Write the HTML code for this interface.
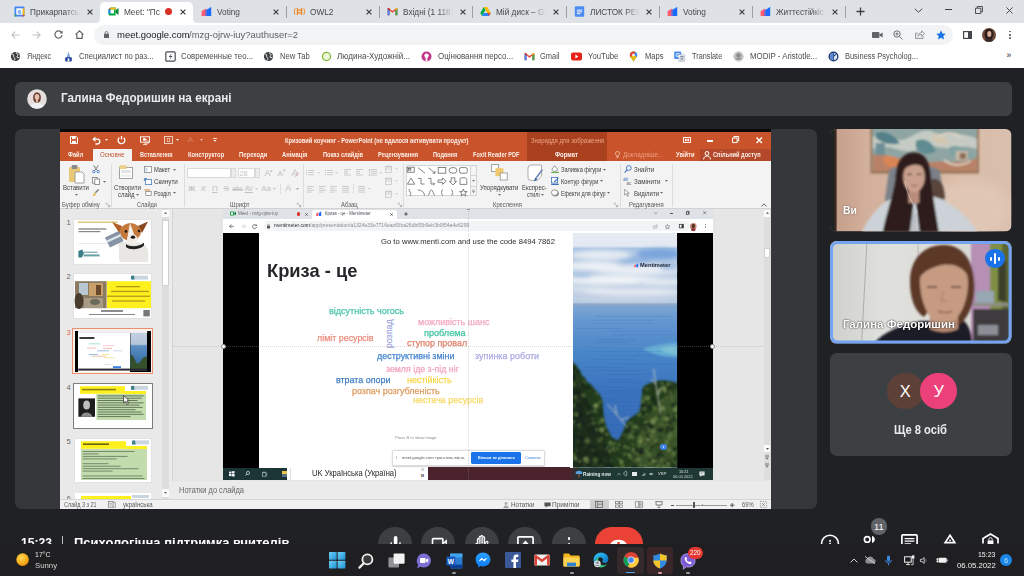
<!DOCTYPE html>
<html lang="uk"><head><meta charset="utf-8"><meta name="viewport" content="width=1024,height=576"><title>Meet: Психологічна підтримка вчителів</title><style>
html,body{margin:0;padding:0;background:#202124;}
body{width:1024px;height:576px;overflow:hidden;position:relative;font-family:"Liberation Sans",sans-serif;}
#root{position:absolute;left:-12px;top:-12px;width:1048px;height:600px;overflow:hidden;background:#202124;}
#pg{position:absolute;left:12px;top:12px;width:1024px;height:576px;}
.b{position:absolute;box-sizing:border-box;}
.t{position:absolute;white-space:nowrap;line-height:1;transform-origin:0 50%;display:block;}
svg{position:absolute;overflow:visible;}
.clip{position:absolute;overflow:hidden;}
</style></head><body><div id="root"><div id="pg">
<!-- chrome_top -->
<div class="b" style="left:-12px;top:-12px;width:1048px;height:35px;background:#dee1e6;"></div>
<div class="b" style="left:-12px;top:22.6px;width:1048px;height:46px;background:#ffffff;"></div>
<div class="b" style="left:100px;top:2px;width:93.2px;height:21px;background:#ffffff;border-radius:5px 5px 0 0;"></div>
<svg style="left:96px;top:18.6px;" width="4" height="4" viewBox="0 0 4 4"><path d="M4 0V4H0A4 4 0 0 0 4 0z" fill="#fff"/></svg>
<svg style="left:193.2px;top:18.6px;" width="4" height="4" viewBox="0 0 4 4"><path d="M0 0V4H4A4 4 0 0 1 0 0z" fill="#fff"/></svg>
<div class="clip" style="left:30.3px;top:4px;width:50px;height:16px;-webkit-mask-image:linear-gradient(90deg,#000 70%,transparent 100%);mask-image:linear-gradient(90deg,#000 70%,transparent 100%);"><span class="t" style="left:0.00px;top:3.52px;font-size:8.6px;color:#45484d;transform:scaleX(0.9600);">Прикарпатськ</span></div>
<svg style="left:86.8px;top:8.5px;" width="6" height="6" viewBox="0 0 6 6"><path d="M0.6 0.6L5.4 5.4M5.4 0.6L0.6 5.4" stroke="#3c4043" stroke-width="1.2" fill="none"/></svg>
<svg style="left:14.3px;top:6.0px;" width="11" height="11" viewBox="0 0 11 11"><rect x="0.5" y="0.5" width="10" height="10" rx="1.2" fill="#4285f4"/><rect x="2.3" y="2.3" width="6.4" height="6.4" fill="#fff"/><path d="M8.7 8.7h1.8v0.6a1.2 1.2 0 0 1-1.2 1.2h-0.6z" fill="#ea4335"/><rect x="0.5" y="8.7" width="1.8" height="1.8" fill="#34a853"/><rect x="8.7" y="2.3" width="1.8" height="6.4" fill="#fbbc04"/><text x="5.5" y="7.9" font-size="6" font-weight="700" text-anchor="middle" fill="#4285f4" font-family="Liberation Sans, sans-serif">6</text></svg>
<div class="clip" style="left:123.5px;top:4px;width:40px;height:16px;"><span class="t" style="left:0.00px;top:3.52px;font-size:8.6px;color:#45484d;transform:scaleX(0.9600);">Meet: &quot;Пс</span></div>
<svg style="left:180px;top:8.5px;" width="6" height="6" viewBox="0 0 6 6"><path d="M0.6 0.6L5.4 5.4M5.4 0.6L0.6 5.4" stroke="#3c4043" stroke-width="1.2" fill="none"/></svg>
<svg style="left:107.5px;top:6.0px;" width="11" height="11" viewBox="0 0 11 11"><path d="M0.5 3.6L2.6 1.6H7.6V9.4H1.5a1 1 0 0 1-1-1z" fill="#00ac47"/><path d="M0.5 3.6L2.6 1.6V3.6z" fill="#ea4335"/><rect x="0.5" y="3.6" width="2.1" height="3.8" fill="#2684fc"/><path d="M2.6 1.6H7.6V3.6H2.6z" fill="#ffba00"/><rect x="2.6" y="3.6" width="3.4" height="3.8" fill="#fff"/><path d="M7.6 4.2L10.5 2V9L7.6 6.8z" fill="#00832d"/></svg>
<div class="clip" style="left:216.7px;top:4px;width:50px;height:16px;"><span class="t" style="left:0.00px;top:3.52px;font-size:8.6px;color:#45484d;transform:scaleX(0.9600);">Voting</span></div>
<svg style="left:273.2px;top:8.5px;" width="6" height="6" viewBox="0 0 6 6"><path d="M0.6 0.6L5.4 5.4M5.4 0.6L0.6 5.4" stroke="#3c4043" stroke-width="1.2" fill="none"/></svg>
<svg style="left:200.7px;top:6.0px;" width="11" height="11" viewBox="0 0 11 11"><path d="M0.6 10V5.2L4.8 2.6V10z" fill="#ff5a6e"/><path d="M4.2 10V4.4L6.4 2.6V10z" fill="#6b6bd6"/><path d="M6 10V3.8L10.2 0.8V10z" fill="#196cff"/></svg>
<div class="clip" style="left:309.9px;top:4px;width:50px;height:16px;"><span class="t" style="left:0.00px;top:3.52px;font-size:8.6px;color:#45484d;transform:scaleX(0.9600);">OWL2</span></div>
<svg style="left:366.4px;top:8.5px;" width="6" height="6" viewBox="0 0 6 6"><path d="M0.6 0.6L5.4 5.4M5.4 0.6L0.6 5.4" stroke="#3c4043" stroke-width="1.2" fill="none"/></svg>
<svg style="left:293.9px;top:6.0px;" width="11" height="11" viewBox="0 0 11 11"><path d="M1.2 2.4C0.2 4 0.2 7 1.2 8.6M9.8 2.4C10.8 4 10.8 7 9.8 8.6" stroke="#f08a24" stroke-width="1" fill="none"/><path d="M3.4 2V9M7.6 2V9M3.4 4.2H7.6M3.4 6.8H7.6" stroke="#f08a24" stroke-width="1.3" fill="none"/></svg>
<div class="clip" style="left:403.1px;top:4px;width:50px;height:16px;-webkit-mask-image:linear-gradient(90deg,#000 70%,transparent 100%);mask-image:linear-gradient(90deg,#000 70%,transparent 100%);"><span class="t" style="left:0.00px;top:3.52px;font-size:8.6px;color:#45484d;transform:scaleX(0.9600);">Вхідні (1 118)</span></div>
<svg style="left:459.6px;top:8.5px;" width="6" height="6" viewBox="0 0 6 6"><path d="M0.6 0.6L5.4 5.4M5.4 0.6L0.6 5.4" stroke="#3c4043" stroke-width="1.2" fill="none"/></svg>
<svg style="left:387.1px;top:6.0px;" width="11" height="11" viewBox="0 0 11 11"><path d="M0.6 2.6V9.2H2.6V4.6L5.5 6.8L8.4 4.6V9.2H10.4V2.6L9.4 2L5.5 4.9L1.6 2z" fill="#ea4335"/><path d="M0.6 2.6V9.2H2.6V4.3z" fill="#4285f4"/><path d="M10.4 2.6V9.2H8.4V4.3z" fill="#34a853"/><path d="M8.4 4.6L10.4 3V2.6L9.4 2L8.4 2.8z" fill="#fbbc04"/><path d="M2.6 4.6L0.6 3V2.6L1.6 2L2.6 2.8z" fill="#c5221f"/></svg>
<div class="clip" style="left:496.3px;top:4px;width:50px;height:16px;-webkit-mask-image:linear-gradient(90deg,#000 70%,transparent 100%);mask-image:linear-gradient(90deg,#000 70%,transparent 100%);"><span class="t" style="left:0.00px;top:3.52px;font-size:8.6px;color:#45484d;transform:scaleX(0.9600);">Мій диск – Go</span></div>
<svg style="left:552.8px;top:8.5px;" width="6" height="6" viewBox="0 0 6 6"><path d="M0.6 0.6L5.4 5.4M5.4 0.6L0.6 5.4" stroke="#3c4043" stroke-width="1.2" fill="none"/></svg>
<svg style="left:480.3px;top:6.0px;" width="11" height="11" viewBox="0 0 11 11"><path d="M3.8 1H7.2L10.7 7H7.3z" fill="#ffba00"/><path d="M3.8 1L0.3 7L2 10L5.5 4z" fill="#00ac47"/><path d="M2 10H9L10.7 7H3.7z" fill="#2684fc"/><path d="M7.3 7H10.7L9 10z" fill="#ea4335"/></svg>
<div class="clip" style="left:589.5px;top:4px;width:50px;height:16px;-webkit-mask-image:linear-gradient(90deg,#000 70%,transparent 100%);mask-image:linear-gradient(90deg,#000 70%,transparent 100%);"><span class="t" style="left:0.00px;top:3.52px;font-size:8.6px;color:#45484d;transform:scaleX(0.9600);">ЛИСТОК РЕЄС</span></div>
<svg style="left:646.0px;top:8.5px;" width="6" height="6" viewBox="0 0 6 6"><path d="M0.6 0.6L5.4 5.4M5.4 0.6L0.6 5.4" stroke="#3c4043" stroke-width="1.2" fill="none"/></svg>
<svg style="left:573.5px;top:6.0px;" width="11" height="11" viewBox="0 0 11 11"><rect x="0.8" y="0.3" width="9.4" height="10.4" rx="1.2" fill="#4a8af4"/><path d="M2.8 4.1H8.2M2.8 5.9H8.2M2.8 7.7H6.4" stroke="#fff" stroke-width="0.95"/></svg>
<div class="clip" style="left:682.7px;top:4px;width:50px;height:16px;"><span class="t" style="left:0.00px;top:3.52px;font-size:8.6px;color:#45484d;transform:scaleX(0.9600);">Voting</span></div>
<svg style="left:739.2px;top:8.5px;" width="6" height="6" viewBox="0 0 6 6"><path d="M0.6 0.6L5.4 5.4M5.4 0.6L0.6 5.4" stroke="#3c4043" stroke-width="1.2" fill="none"/></svg>
<svg style="left:666.7px;top:6.0px;" width="11" height="11" viewBox="0 0 11 11"><path d="M0.6 10V5.2L4.8 2.6V10z" fill="#ff5a6e"/><path d="M4.2 10V4.4L6.4 2.6V10z" fill="#6b6bd6"/><path d="M6 10V3.8L10.2 0.8V10z" fill="#196cff"/></svg>
<div class="clip" style="left:775.9px;top:4px;width:50px;height:16px;-webkit-mask-image:linear-gradient(90deg,#000 70%,transparent 100%);mask-image:linear-gradient(90deg,#000 70%,transparent 100%);"><span class="t" style="left:0.00px;top:3.52px;font-size:8.6px;color:#45484d;transform:scaleX(0.9600);">Життєстійкіст</span></div>
<svg style="left:832.4px;top:8.5px;" width="6" height="6" viewBox="0 0 6 6"><path d="M0.6 0.6L5.4 5.4M5.4 0.6L0.6 5.4" stroke="#3c4043" stroke-width="1.2" fill="none"/></svg>
<svg style="left:759.9px;top:6.0px;" width="11" height="11" viewBox="0 0 11 11"><path d="M0.6 10V5.2L4.8 2.6V10z" fill="#ff5a6e"/><path d="M4.2 10V4.4L6.4 2.6V10z" fill="#6b6bd6"/><path d="M6 10V3.8L10.2 0.8V10z" fill="#196cff"/></svg>
<div class="b" style="left:285.9px;top:6px;width:1px;height:12px;background:#9aa0a6;"></div>
<div class="b" style="left:379.1px;top:6px;width:1px;height:12px;background:#9aa0a6;"></div>
<div class="b" style="left:472.3px;top:6px;width:1px;height:12px;background:#9aa0a6;"></div>
<div class="b" style="left:565.5px;top:6px;width:1px;height:12px;background:#9aa0a6;"></div>
<div class="b" style="left:658.7px;top:6px;width:1px;height:12px;background:#9aa0a6;"></div>
<div class="b" style="left:751.9px;top:6px;width:1px;height:12px;background:#9aa0a6;"></div>
<div class="b" style="left:845.1px;top:6px;width:1px;height:12px;background:#9aa0a6;"></div>
<div class="b" style="left:164.5px;top:8px;width:7px;height:7px;background:#d93025;border-radius:50%;"></div>
<svg style="left:855.5px;top:7px;" width="9" height="9" viewBox="0 0 9 9"><path d="M4.5 0.5V8.5M0.5 4.5H8.5" stroke="#3c4043" stroke-width="1.3" fill="none"/></svg>
<svg style="left:913.5px;top:7.5px;" width="9" height="5" viewBox="0 0 9 5"><path d="M0.8 0.8L4.5 4.2L8.2 0.8" stroke="#45484d" stroke-width="1" fill="none"/></svg>
<div class="b" style="left:944.5px;top:9.3px;width:7px;height:1px;background:#3c4043;"></div>
<svg style="left:974.5px;top:6px;" width="8" height="8" viewBox="0 0 8 8"><path d="M0.5 2.2h5.3v5.3h-5.3zM2.2 2.2V0.5h5.3v5.3H5.8" stroke="#3c4043" stroke-width="0.9" fill="none"/></svg>
<svg style="left:1006px;top:6.5px;" width="7" height="7" viewBox="0 0 7 7"><path d="M0.4 0.4L6.6 6.6M6.6 0.4L0.4 6.6" stroke="#3c4043" stroke-width="0.9" fill="none"/></svg>
<svg style="left:11px;top:30.700000000000003px;" width="9" height="8" viewBox="0 0 9 8"><path d="M8.5 4H1M4.2 0.6L0.9 4L4.2 7.4" stroke="#bdc1c6" stroke-width="1.1" fill="none"/></svg>
<svg style="left:32px;top:30.700000000000003px;" width="9" height="8" viewBox="0 0 9 8"><path d="M0.5 4H8M4.8 0.6L8.1 4L4.8 7.4" stroke="#bdc1c6" stroke-width="1.1" fill="none"/></svg>
<svg style="left:53.5px;top:30.200000000000003px;" width="9" height="9" viewBox="0 0 9 9"><path d="M7.6 2.6A3.6 3.6 0 1 0 8.1 5.2" stroke="#5f6368" stroke-width="1.2" fill="none"/><path d="M8.6 0.4V3.4H5.6z" fill="#5f6368"/></svg>
<svg style="left:75px;top:30.200000000000003px;" width="9" height="9" viewBox="0 0 9 9"><path d="M0.6 4.6L4.5 0.9L8.4 4.6M1.8 4V8.3H7.2V4" stroke="#5f6368" stroke-width="1.15" fill="none"/></svg>
<div class="b" style="left:93.5px;top:25px;width:859px;height:19.5px;background:#f1f3f4;border-radius:10px;"></div>
<svg style="left:103.5px;top:30.700000000000003px;" width="5" height="7" viewBox="0 0 5 7"><rect x="0" y="2.8" width="5" height="4.2" rx="0.6" fill="#5f6368"/><path d="M1.1 3V1.9a1.4 1.4 0 0 1 2.8 0V3" stroke="#5f6368" stroke-width="0.8" fill="none"/></svg>
<span class="t" style="left:116.60px;top:30.07px;font-size:9.6px;color:#202124;transform:scaleX(0.9861);">meet.google.com</span>
<span class="t" style="left:189.11px;top:30.07px;font-size:9.6px;color:#5f6368;transform:scaleX(0.9861);">/mzg-ojrw-iuy?authuser=2</span>
<svg style="left:871.5px;top:31.700000000000003px;" width="11" height="6" viewBox="0 0 11 6"><rect x="0" y="0" width="7.4" height="6" rx="0.8" fill="#5f6368"/><path d="M7.4 2.6L10.6 0.6V5.4L7.4 3.4z" fill="#5f6368"/></svg>
<svg style="left:893px;top:30.200000000000003px;" width="10" height="10" viewBox="0 0 10 10"><circle cx="4" cy="4" r="3.2" stroke="#5f6368" stroke-width="0.9" fill="none"/><path d="M6.4 6.4L9.4 9.4M2.4 4H5.6M4 2.4V5.6" stroke="#5f6368" stroke-width="0.9" fill="none"/></svg>
<svg style="left:914.5px;top:30.200000000000003px;" width="10" height="9" viewBox="0 0 10 9"><path d="M2.6 3.2H0.6V8.4H8V6.4" stroke="#80868b" stroke-width="0.9" fill="none"/><path d="M2.8 6.2C3.2 3.9 4.6 2.8 6.6 2.7V0.8L9.6 3.6L6.6 6.3V4.5C5 4.5 3.8 5 2.8 6.2z" stroke="#80868b" stroke-width="0.8" fill="none"/></svg>
<svg style="left:936px;top:29.700000000000003px;" width="10" height="10" viewBox="0 0 10 10"><path d="M5 0.3L6.45 3.4L9.8 3.8L7.3 6.1L8 9.5L5 7.8L2 9.5L2.7 6.1L0.2 3.8L3.55 3.4z" fill="#1a73e8"/></svg>
<svg style="left:963px;top:30.700000000000003px;" width="9" height="8" viewBox="0 0 9 8"><rect x="0.6" y="0.6" width="7.8" height="6.8" fill="none" stroke="#45484d" stroke-width="1.2"/><rect x="5" y="0.6" width="3.4" height="6.8" fill="#45484d"/></svg>
<svg style="left:981.7px;top:27.700000000000003px;" width="14" height="14" viewBox="0 0 14 14"><defs><clipPath id="cpA"><circle cx="7" cy="7" r="7"/></clipPath></defs><g clip-path="url(#cpA)"><rect width="14" height="14" fill="#6b4a3c"/><ellipse cx="7" cy="6.3" rx="4.4" ry="5.6" fill="#2e1d18"/><ellipse cx="7.3" cy="6" rx="2.1" ry="2.9" fill="#d9b19b"/><ellipse cx="7" cy="14" rx="5" ry="3.6" fill="#3a2a28"/></g></svg>
<div class="b" style="left:1009.1px;top:30.500000000000004px;width:1.7px;height:1.7px;background:#5f6368;border-radius:50%;"></div>
<div class="b" style="left:1009.1px;top:33.900000000000006px;width:1.7px;height:1.7px;background:#5f6368;border-radius:50%;"></div>
<div class="b" style="left:1009.1px;top:37.300000000000004px;width:1.7px;height:1.7px;background:#5f6368;border-radius:50%;"></div>
<svg style="left:9.5px;top:50.7px;" width="11" height="11" viewBox="0 0 11 11"><circle cx="5.5" cy="5.5" r="4.6" fill="#3c4043"/><path d="M2 3.2C3.4 3 4 4 3.6 5C3.2 6 4.6 6.4 4.8 7.6C5 8.8 4.2 9.4 3.8 9.6M6.8 1.2C6 2.2 6.6 3 7.6 3.2C8.6 3.4 8.2 4.6 7.4 5C6.6 5.4 7 6.8 8 6.8C8.8 6.8 9.4 6.2 9.8 5.6" stroke="#fff" stroke-width="0.9" fill="none"/></svg>
<span class="t" style="left:27.00px;top:51.87px;font-size:8.3px;color:#4a4d51;transform:scaleX(0.8605);">Яндекс</span>
<svg style="left:62.5px;top:50.7px;" width="11" height="11" viewBox="0 0 11 11"><path d="M5.5 0.6L7.6 7.4H3.4z" fill="#7aa7d9"/><rect x="2.2" y="6.2" width="6.6" height="4.2" rx="1" fill="#1f3f8f"/><rect x="4.6" y="7.4" width="1.8" height="3" fill="#fff"/></svg>
<span class="t" style="left:79.00px;top:51.87px;font-size:8.3px;color:#4a4d51;transform:scaleX(0.9298);">Специалист по раз...</span>
<svg style="left:164.5px;top:50.7px;" width="11" height="11" viewBox="0 0 11 11"><rect x="0.8" y="0.8" width="9.4" height="9.4" rx="1.2" fill="#fff" stroke="#4a4f57" stroke-width="1.2"/><path d="M6.8 2.4L3.6 6H5.6L4.4 8.8L7.6 5H5.6z" fill="#4a4f57"/></svg>
<span class="t" style="left:181.00px;top:51.87px;font-size:8.3px;color:#4a4d51;transform:scaleX(0.9419);">Современные тео...</span>
<svg style="left:263.2px;top:50.7px;" width="11" height="11" viewBox="0 0 11 11"><circle cx="5.5" cy="5.5" r="4.6" fill="#3c4043"/><path d="M2 3.2C3.4 3 4 4 3.6 5C3.2 6 4.6 6.4 4.8 7.6C5 8.8 4.2 9.4 3.8 9.6M6.8 1.2C6 2.2 6.6 3 7.6 3.2C8.6 3.4 8.2 4.6 7.4 5C6.6 5.4 7 6.8 8 6.8C8.8 6.8 9.4 6.2 9.8 5.6" stroke="#fff" stroke-width="0.9" fill="none"/></svg>
<span class="t" style="left:279.80px;top:51.87px;font-size:8.3px;color:#4a4d51;transform:scaleX(0.9254);">New Tab</span>
<svg style="left:320.5px;top:50.7px;" width="11" height="11" viewBox="0 0 11 11"><circle cx="5.5" cy="5.5" r="4.1" fill="#eef6dc" stroke="#86b93a" stroke-width="1.3"/></svg>
<span class="t" style="left:336.90px;top:51.87px;font-size:8.3px;color:#4a4d51;transform:scaleX(0.9743);">Людина-Художній...</span>
<svg style="left:421.4px;top:50.7px;" width="11" height="11" viewBox="0 0 11 11"><circle cx="5.5" cy="5.5" r="5" fill="#c2358a"/><circle cx="5.5" cy="4.6" r="2.2" fill="#fff"/><rect x="4.6" y="6" width="1.8" height="4.4" fill="#fff"/></svg>
<span class="t" style="left:437.60px;top:51.87px;font-size:8.3px;color:#4a4d51;transform:scaleX(0.9610);">Оцінювання персо...</span>
<svg style="left:523.9px;top:50.7px;" width="11" height="11" viewBox="0 0 11 11"><path d="M0.6 2.6V9.2H2.6V4.6L5.5 6.8L8.4 4.6V9.2H10.4V2.6L9.4 2L5.5 4.9L1.6 2z" fill="#ea4335"/><path d="M0.6 2.6V9.2H2.6V4.3z" fill="#4285f4"/><path d="M10.4 2.6V9.2H8.4V4.3z" fill="#34a853"/><path d="M8.4 4.6L10.4 3V2.6L9.4 2L8.4 2.8z" fill="#fbbc04"/><path d="M2.6 4.6L0.6 3V2.6L1.6 2L2.6 2.8z" fill="#c5221f"/></svg>
<span class="t" style="left:540.20px;top:51.87px;font-size:8.3px;color:#4a4d51;transform:scaleX(0.9004);">Gmail</span>
<svg style="left:571.1px;top:50.7px;" width="11" height="11" viewBox="0 0 11 11"><rect x="0" y="1.6" width="11" height="7.8" rx="2" fill="#e62117"/><path d="M4.4 3.6L7.4 5.5L4.4 7.4z" fill="#fff"/></svg>
<span class="t" style="left:587.70px;top:51.87px;font-size:8.3px;color:#4a4d51;transform:scaleX(0.9305);">YouTube</span>
<svg style="left:628.3px;top:50.7px;" width="11" height="11" viewBox="0 0 11 11"><path d="M5.5 0.4C3.3 0.4 1.8 2 1.8 4C1.8 6.4 4.6 8 5.5 10.8C6.4 8 9.2 6.4 9.2 4C9.2 2 7.7 0.4 5.5 0.4z" fill="#34a853"/><path d="M5.5 0.4C3.3 0.4 1.8 2 1.8 4C1.8 4.8 2.1 5.5 2.5 6.2L7.9 1.3C7.3 0.7 6.5 0.4 5.5 0.4z" fill="#ea4335"/><path d="M7.9 1.3L5.5 3.5L8.6 6C9 5.3 9.2 4.7 9.2 4C9.2 2.9 8.7 2 7.9 1.3z" fill="#4285f4"/><path d="M2.5 6.2C3.3 7.6 4.9 8.9 5.5 10.8C6.1 8.9 7.8 7.5 8.6 6L5.5 3.5z" fill="#fbbc04" opacity="0.9"/><circle cx="5.5" cy="4" r="1.3" fill="#fff"/></svg>
<span class="t" style="left:645.00px;top:51.87px;font-size:8.3px;color:#4a4d51;transform:scaleX(0.9122);">Maps</span>
<svg style="left:674.0px;top:50.7px;" width="11" height="11" viewBox="0 0 11 11"><rect x="0.2" y="0.6" width="7" height="7.4" rx="1" fill="#4a8af4"/><rect x="4.4" y="3.4" width="6.4" height="7.2" rx="1" fill="#dfe3ea" stroke="#9aa4b4" stroke-width="0.4"/><text x="3.6" y="6.4" font-size="5.4" font-weight="700" text-anchor="middle" fill="#fff" font-family="Liberation Sans, sans-serif">G</text><path d="M6 5.6H9.4M7.7 5V5.6M6.4 9.2C8 8.4 8.8 7 9 5.6M6.8 6.6C7.4 7.8 8.2 8.6 9.4 9.2" stroke="#5f6b7d" stroke-width="0.6" fill="none"/></svg>
<span class="t" style="left:691.80px;top:51.87px;font-size:8.3px;color:#4a4d51;transform:scaleX(0.8813);">Translate</span>
<svg style="left:733.2px;top:50.7px;" width="11" height="11" viewBox="0 0 11 11"><circle cx="5.5" cy="5.5" r="5" fill="#b9bbbd"/><circle cx="5.5" cy="4.4" r="2.2" fill="#8a8c8e"/><path d="M2 8.6C3 6.6 8 6.6 9 8.6" fill="#8a8c8e"/><circle cx="5.5" cy="5.5" r="4.6" fill="none" stroke="#d6d7d8" stroke-width="0.8"/></svg>
<span class="t" style="left:749.80px;top:51.87px;font-size:8.3px;color:#4a4d51;transform:scaleX(0.9479);">MODIP - Aristotle...</span>
<svg style="left:827.5px;top:50.7px;" width="11" height="11" viewBox="0 0 11 11"><circle cx="5.5" cy="5.5" r="5" fill="#1d3c78"/><circle cx="5.5" cy="5.5" r="3.6" fill="#e8eef8"/><path d="M5.5 1.9V9.1M5.5 5.5L8 3.2" stroke="#1d3c78" stroke-width="1.1" fill="none"/><path d="M5.5 1.9A3.6 3.6 0 0 0 5.5 9.1z" fill="#5b86c9"/></svg>
<span class="t" style="left:845.00px;top:51.87px;font-size:8.3px;color:#4a4d51;transform:scaleX(0.8990);">Business Psycholog...</span>
<span class="t" style="left:1006.50px;top:51.40px;font-size:8.5px;color:#5f6368;font-weight:700;">»</span>
<!-- meet_frame -->
<div class="b" style="left:-12px;top:68.4px;width:1048px;height:520px;background:#202124;"></div>
<div class="b" style="left:14.6px;top:82px;width:997.2px;height:33.8px;background:#3c4043;border-radius:6px;"></div>
<svg style="left:27.2px;top:88.8px;" width="20" height="20" viewBox="0 0 20 20"><defs><clipPath id="cpB"><circle cx="10" cy="10" r="9.8"/></clipPath></defs><g clip-path="url(#cpB)"><rect width="20" height="20" fill="#e6dedd"/><ellipse cx="10" cy="8.6" rx="3.9" ry="5.4" fill="#6a4032"/><ellipse cx="10" cy="8" rx="2.3" ry="3" fill="#e8c0ad"/><ellipse cx="10" cy="19" rx="6.6" ry="5.6" fill="#eef0f2"/><rect x="9" y="10.4" width="2" height="2.6" fill="#e2b7a3"/></g></svg>
<span class="t" style="left:60.50px;top:92.10px;font-size:12.4px;color:#e8eaed;font-weight:700;transform:scaleX(0.9458);">Галина Федоришин на екрані</span>
<div class="b" style="left:14.6px;top:128.8px;width:802.2px;height:380.4px;background:#36373a;border-radius:7px;"></div>
<!-- ppt_top -->
<div class="b" style="left:59.8px;top:128.8px;width:711.2px;height:380.4px;background:#e6e6e6;"></div>
<div class="b" style="left:59.8px;top:128.8px;width:711.2px;height:3.6px;background:#0a0a0a;"></div>
<div class="b" style="left:59.8px;top:132.2px;width:711.2px;height:29.2px;background:#c9532b;"></div>
<div class="b" style="left:527px;top:132.2px;width:80px;height:29.2px;background:#a9411f;"></div>
<div class="b" style="left:699.6px;top:149.2px;width:71.4px;height:12.2px;background:#b3482a;"></div>
<div class="b" style="left:92.7px;top:148.8px;width:39.4px;height:12.8px;background:#f3f3f3;"></div>
<div class="b" style="left:59.8px;top:161.2px;width:711.2px;height:47.8px;background:#f3f3f3;border-bottom:1px solid #d2d2d2;"></div>
<svg style="left:70px;top:135.8px;" width="8" height="8" viewBox="0 0 8 8"><path d="M0.5 0.5H6.2L7.5 1.8V7.5H0.5z" fill="none" stroke="#fff" stroke-width="1"/><rect x="2" y="0.8" width="3.6" height="2.2" fill="#fff"/><rect x="2" y="4.8" width="4" height="2.6" fill="#fff"/></svg>
<svg style="left:91.5px;top:135.8px;" width="9" height="8" viewBox="0 0 9 8"><path d="M1 3.2H5.4A2.4 2.4 0 0 1 5.4 8H3.4" stroke="#fff" stroke-width="1.3" fill="none"/><path d="M3.4 0.4L0.4 3.2L3.4 6z" fill="#fff"/></svg>
<svg style="left:104.5px;top:139.3px;" width="3" height="2" viewBox="0 0 3 2"><path d="M0 0H3L1.5 1.8z" fill="#fff"/></svg>
<svg style="left:116.5px;top:135.8px;" width="9" height="9" viewBox="0 0 9 9"><path d="M6.8 1.8A3.4 3.4 0 1 1 2.4 1.6" stroke="#fff" stroke-width="1.3" fill="none"/><path d="M4.5 0V3.4" stroke="#fff" stroke-width="1.3"/></svg>
<svg style="left:140px;top:135.8px;" width="10" height="9" viewBox="0 0 10 9"><rect x="0.5" y="0.8" width="9" height="5.4" fill="none" stroke="#fff" stroke-width="0.9"/><path d="M5 6.2V8.4M3 8.6H7M3.6 2.2L6.6 3.5L3.6 4.8z" stroke="#fff" stroke-width="0.8" fill="#fff"/><circle cx="7.4" cy="6.2" r="1.5" fill="none" stroke="#fff" stroke-width="0.6"/></svg>
<svg style="left:164px;top:135.8px;" width="9" height="8" viewBox="0 0 9 8"><rect x="0.5" y="0.5" width="8" height="7" fill="none" stroke="#f6d9cd" stroke-width="0.9"/><rect x="3.2" y="2.6" width="2.6" height="2.8" fill="none" stroke="#f6d9cd" stroke-width="0.7"/></svg>
<svg style="left:176px;top:139.3px;" width="3" height="2" viewBox="0 0 3 2"><path d="M0 0H3L1.5 1.8z" fill="#fff"/></svg>
<span class="t" style="left:187.80px;top:135.83px;font-size:8px;color:#dd7d5b;">A</span>
<svg style="left:199.5px;top:139.3px;" width="3" height="2" viewBox="0 0 3 2"><path d="M0 0H3L1.5 1.8z" fill="#f0c0ac"/></svg>
<svg style="left:213px;top:137.8px;" width="4" height="4" viewBox="0 0 4 4"><path d="M0 0.5H4" stroke="#fff" stroke-width="0.8"/><path d="M0.4 2H3.6L2 3.8z" fill="#fff"/></svg>
<span class="t" style="left:284.50px;top:137.61px;font-size:6.6px;color:#fdeee8;font-weight:700;transform:scaleX(0.8708);">Кризовий коучинг - PowerPoint (не вдалося активувати продукт)</span>
<span class="t" style="left:530.60px;top:137.61px;font-size:6.6px;color:#eea283;transform:scaleX(0.9001);">Знаряддя для зображення</span>
<svg style="left:683px;top:136.8px;" width="8" height="6" viewBox="0 0 8 6"><rect x="0.5" y="0.5" width="7" height="5" fill="none" stroke="#fff" stroke-width="0.9"/><rect x="2" y="1.8" width="1.6" height="2.4" fill="#fff"/><rect x="4.4" y="1.8" width="1.6" height="2.4" fill="#fff"/></svg>
<div class="b" style="left:707.4px;top:140.4px;width:6px;height:1.2px;background:#ffffff;"></div>
<svg style="left:731.5px;top:136.3px;" width="7" height="7" viewBox="0 0 7 7"><path d="M0.5 2h4.6v4.6H0.5zM2 2V0.5h4.6v4.6H5.1" stroke="#fff" stroke-width="1" fill="none"/></svg>
<svg style="left:756px;top:136.60000000000002px;" width="6.4" height="6.4" viewBox="0 0 6.4 6.4"><path d="M0.5 0.5L5.9 5.9M5.9 0.5L0.5 5.9" stroke="#fff" stroke-width="1.4" fill="none"/></svg>
<span class="t" style="left:67.70px;top:152.33px;font-size:6.7px;color:#fdeee8;font-weight:700;transform:scaleX(0.8605);">Файл</span>
<span class="t" style="left:139.60px;top:152.33px;font-size:6.7px;color:#fdeee8;font-weight:700;transform:scaleX(0.8266);">Вставлення</span>
<span class="t" style="left:187.80px;top:152.33px;font-size:6.7px;color:#fdeee8;font-weight:700;transform:scaleX(0.8703);">Конструктор</span>
<span class="t" style="left:238.60px;top:152.33px;font-size:6.7px;color:#fdeee8;font-weight:700;transform:scaleX(0.8840);">Переходи</span>
<span class="t" style="left:282.40px;top:152.33px;font-size:6.7px;color:#fdeee8;font-weight:700;transform:scaleX(0.8702);">Анімація</span>
<span class="t" style="left:323.00px;top:152.33px;font-size:6.7px;color:#fdeee8;font-weight:700;transform:scaleX(0.8468);">Показ слайдів</span>
<span class="t" style="left:377.70px;top:152.33px;font-size:6.7px;color:#fdeee8;font-weight:700;transform:scaleX(0.8605);">Рецензування</span>
<span class="t" style="left:433.00px;top:152.33px;font-size:6.7px;color:#fdeee8;font-weight:700;transform:scaleX(0.8448);">Подання</span>
<span class="t" style="left:472.60px;top:152.33px;font-size:6.7px;color:#fdeee8;font-weight:700;transform:scaleX(0.8310);">Foxit Reader PDF</span>
<span class="t" style="left:555.00px;top:152.33px;font-size:6.7px;color:#fdeee8;font-weight:700;transform:scaleX(0.8937);">Формат</span>
<span class="t" style="left:675.80px;top:152.33px;font-size:6.7px;color:#fdeee8;font-weight:700;transform:scaleX(0.8655);">Увійти</span>
<span class="t" style="left:713.30px;top:152.33px;font-size:6.7px;color:#fdeee8;font-weight:700;transform:scaleX(0.8459);">Спільний доступ</span>
<span class="t" style="left:100.00px;top:152.33px;font-size:6.7px;color:#c4532f;transform:scaleX(0.9031);">Основне</span>
<span class="t" style="left:623.40px;top:152.33px;font-size:6.7px;color:#ee9f80;transform:scaleX(0.9370);">Докладніше...</span>
<svg style="left:615px;top:150.5px;" width="5" height="8" viewBox="0 0 5 8"><path d="M2.5 0.5A2 2 0 0 0 1.4 4.2V5.4H3.6V4.2A2 2 0 0 0 2.5 0.5zM1.6 6.6H3.4" stroke="#f6c9b6" stroke-width="0.8" fill="none"/></svg>
<svg style="left:703px;top:150.5px;" width="8" height="9" viewBox="0 0 8 9"><circle cx="4" cy="2.4" r="1.9" fill="none" stroke="#fff" stroke-width="1"/><path d="M0.6 8.4C0.8 5.8 2.4 5 4 5C5.6 5 7.2 5.8 7.4 8.4" stroke="#fff" stroke-width="1" fill="none"/></svg>
<div class="b" style="left:110.7px;top:164px;width:0.8px;height:43px;background:#dcdcdc;"></div>
<div class="b" style="left:184px;top:164px;width:0.8px;height:43px;background:#dcdcdc;"></div>
<div class="b" style="left:302.5px;top:164px;width:0.8px;height:43px;background:#dcdcdc;"></div>
<div class="b" style="left:403px;top:164px;width:0.8px;height:43px;background:#dcdcdc;"></div>
<div class="b" style="left:619.5px;top:164px;width:0.8px;height:43px;background:#dcdcdc;"></div>
<div class="b" style="left:672.3px;top:164px;width:0.8px;height:43px;background:#dcdcdc;"></div>
<svg style="left:68px;top:163.5px;" width="17" height="20" viewBox="0 0 17 20"><rect x="1" y="3" width="11" height="15" rx="1" fill="#e9c877"/><rect x="3.6" y="1" width="5.8" height="4" rx="1" fill="#8a8a8a"/><path d="M7 8H14L16 10V19H7z" fill="#fff" stroke="#8c8c8c" stroke-width="0.8"/></svg>
<span class="t" style="left:62.80px;top:184.61px;font-size:6.6px;color:#3f3f3f;transform:scaleX(0.9153);">Вставити</span>
<svg style="left:75px;top:194.2px;" width="3" height="2" viewBox="0 0 3 2"><path d="M0 0H3L1.5 1.8z" fill="#666"/></svg>
<svg style="left:91.5px;top:164.5px;" width="8" height="8" viewBox="0 0 8 8"><path d="M1.6 0.4L5.6 5.8M6.4 0.4L2.4 5.8" stroke="#6e6e6e" stroke-width="0.9"/><circle cx="1.8" cy="6.6" r="1.2" fill="none" stroke="#3b78c4" stroke-width="0.9"/><circle cx="6.2" cy="6.6" r="1.2" fill="none" stroke="#3b78c4" stroke-width="0.9"/></svg>
<svg style="left:91.5px;top:177px;" width="8" height="8" viewBox="0 0 8 8"><rect x="0.5" y="0.5" width="4.6" height="5.6" fill="#fff" stroke="#7a7a7a" stroke-width="0.8"/><rect x="2.8" y="2" width="4.6" height="5.6" fill="#fff" stroke="#7a7a7a" stroke-width="0.8"/></svg>
<svg style="left:103.2px;top:180.6px;" width="3" height="2" viewBox="0 0 3 2"><path d="M0 0H3L1.5 1.8z" fill="#666"/></svg>
<svg style="left:92px;top:189px;" width="8" height="8" viewBox="0 0 8 8"><path d="M6.6 0.6L3.4 3.8" stroke="#7a7a7a" stroke-width="1.4"/><path d="M0.6 7.4L2 3.6L4.4 5.6z" fill="#e9b84d"/></svg>
<span class="t" style="left:62.20px;top:202.21px;font-size:6.6px;color:#5a5a5a;transform:scaleX(0.8947);">Буфер обміну</span>
<svg style="left:105.5px;top:203px;" width="4" height="4" viewBox="0 0 4 4"><path d="M0.3 1.6V0.3H1.6M3.7 1.8V3.7H1.8M1.4 1.4L3.4 3.4" stroke="#8a8a8a" stroke-width="0.6" fill="none"/></svg>
<svg style="left:119px;top:164.5px;" width="17" height="15" viewBox="0 0 17 15"><rect x="0.5" y="2.5" width="13" height="11" fill="#fff" stroke="#8c8c8c" stroke-width="0.8"/><rect x="2.2" y="5" width="9.6" height="3" fill="#e3e3e3"/><rect x="2.2" y="9.4" width="9.6" height="2.4" fill="#ededed"/><rect x="0.5" y="0.2" width="7" height="3.8" fill="#f0cf8a"/></svg>
<span class="t" style="left:114.00px;top:184.61px;font-size:6.6px;color:#3f3f3f;transform:scaleX(0.9330);">Створити</span>
<span class="t" style="left:117.50px;top:192.41px;font-size:6.6px;color:#3f3f3f;transform:scaleX(0.8995);">слайд</span>
<svg style="left:135.6px;top:194.2px;" width="3" height="2" viewBox="0 0 3 2"><path d="M0 0H3L1.5 1.8z" fill="#666"/></svg>
<svg style="left:144px;top:165.5px;" width="8" height="7" viewBox="0 0 8 7"><rect x="0.4" y="0.4" width="7.2" height="6.2" fill="#fff" stroke="#7a7a7a" stroke-width="0.7"/><rect x="1.4" y="1.6" width="2" height="4" fill="#c6d6ea"/></svg>
<span class="t" style="left:154.20px;top:166.81px;font-size:6.6px;color:#3f3f3f;transform:scaleX(0.8669);">Макет</span>
<svg style="left:172.6px;top:168.6px;" width="3" height="2" viewBox="0 0 3 2"><path d="M0 0H3L1.5 1.8z" fill="#666"/></svg>
<svg style="left:144px;top:177.6px;" width="8" height="7" viewBox="0 0 8 7"><rect x="1.4" y="1.4" width="6.2" height="5.2" fill="#fff" stroke="#4a7fc0" stroke-width="0.8"/><path d="M0.4 3V0.6H3" stroke="#4a7fc0" stroke-width="0.9" fill="none"/></svg>
<span class="t" style="left:154.20px;top:178.61px;font-size:6.6px;color:#3f3f3f;transform:scaleX(0.9526);">Скинути</span>
<svg style="left:144px;top:189.4px;" width="8" height="7" viewBox="0 0 8 7"><rect x="1.8" y="2.4" width="5.4" height="4.2" fill="#fff" stroke="#7a7a7a" stroke-width="0.7"/><path d="M0.4 1H6" stroke="#d9822b" stroke-width="1"/></svg>
<span class="t" style="left:154.20px;top:190.71px;font-size:6.6px;color:#3f3f3f;transform:scaleX(0.8418);">Розділ</span>
<svg style="left:172.6px;top:192.4px;" width="3" height="2" viewBox="0 0 3 2"><path d="M0 0H3L1.5 1.8z" fill="#666"/></svg>
<span class="t" style="left:137.00px;top:202.21px;font-size:6.6px;color:#5a5a5a;transform:scaleX(0.8511);">Слайди</span>
<div class="b" style="left:186.8px;top:168.2px;width:44.2px;height:10px;background:#fff;border:0.7px solid #d9d9d9;"></div>
<div class="b" style="left:231px;top:168.2px;width:5px;height:10px;background:#ececec;border:0.7px solid #d9d9d9;"></div>
<div class="b" style="left:237.6px;top:168.2px;width:17.4px;height:10px;background:#fff;border:0.7px solid #d9d9d9;"></div>
<div class="b" style="left:255px;top:168.2px;width:5px;height:10px;background:#ececec;border:0.7px solid #d9d9d9;"></div>
<span class="t" style="left:239.60px;top:170.11px;font-size:7.2px;color:#c6c6c6;">28</span>
<span class="t" style="left:264.50px;top:168.98px;font-size:9px;color:#c2c2c2;">A</span>
<span class="t" style="left:270.30px;top:167.77px;font-size:5px;color:#c2c2c2;">▴</span>
<span class="t" style="left:277.60px;top:169.83px;font-size:8px;color:#c2c2c2;">A</span>
<span class="t" style="left:282.60px;top:168.17px;font-size:5px;color:#c2c2c2;">▾</span>
<svg style="left:290.5px;top:168.5px;" width="8" height="8" viewBox="0 0 8 8"><path d="M1 6.8L3.4 1H4.4L6.6 6.8M2 4.8H5.6" stroke="#c2c2c2" stroke-width="0.8" fill="none"/><path d="M4.4 7.6L7.6 3.6" stroke="#d7b6c2" stroke-width="1.3"/></svg>
<span class="t" style="left:188.08px;top:185.13px;font-size:8px;color:#c2c2c2;font-weight:700;">Ж</span>
<span class="t" style="left:201.07px;top:185.13px;font-size:8px;color:#c2c2c2;font-style:italic;">К</span>
<span class="t" style="left:211.93px;top:185.13px;font-size:8px;color:#c2c2c2;text-decoration:underline;">П</span>
<span class="t" style="left:223.63px;top:185.13px;font-size:8px;color:#c2c2c2;text-decoration:line-through;">S</span>
<span class="t" style="left:232.28px;top:186.31px;font-size:6.6px;color:#c2c2c2;text-decoration:line-through;">abc</span>
<span class="t" style="left:244.65px;top:185.71px;font-size:6.6px;color:#c2c2c2;text-decoration:underline;">AV</span>
<svg style="left:254.6px;top:188px;" width="3" height="2" viewBox="0 0 3 2"><path d="M0 0H3L1.5 1.8z" fill="#c2c2c2"/></svg>
<span class="t" style="left:261.36px;top:185.47px;font-size:7.6px;color:#c2c2c2;">Aa</span>
<svg style="left:272.6px;top:188px;" width="3" height="2" viewBox="0 0 3 2"><path d="M0 0H3L1.5 1.8z" fill="#c2c2c2"/></svg>
<div class="b" style="left:279.8px;top:184px;width:0.7px;height:10px;background:#dddddd;"></div>
<span class="t" style="left:285.20px;top:184.28px;font-size:9px;color:#c2c2c2;">A</span>
<svg style="left:295.6px;top:188px;" width="3" height="2" viewBox="0 0 3 2"><path d="M0 0H3L1.5 1.8z" fill="#9a9a9a"/></svg>
<span class="t" style="left:229.80px;top:202.21px;font-size:6.6px;color:#5a5a5a;transform:scaleX(0.8985);">Шрифт</span>
<svg style="left:297px;top:203px;" width="4" height="4" viewBox="0 0 4 4"><path d="M0.3 1.6V0.3H1.6M3.7 1.8V3.7H1.8M1.4 1.4L3.4 3.4" stroke="#8a8a8a" stroke-width="0.6" fill="none"/></svg>
<svg style="left:308.3px;top:169.9px;" width="6" height="6.6000000000000005" viewBox="0 0 6 6.6000000000000005"><rect x="0" y="0.0" width="6" height="0.8" fill="#c4c4c4"/><rect x="0" y="2.2" width="6" height="0.8" fill="#c4c4c4"/><rect x="0" y="4.4" width="6" height="0.8" fill="#c4c4c4"/></svg>
<div class="b" style="left:305.90000000000003px;top:169.9px;width:1px;height:1px;background:#c4c4c4;"></div>
<div class="b" style="left:305.90000000000003px;top:172.1px;width:1px;height:1px;background:#c4c4c4;"></div>
<div class="b" style="left:305.90000000000003px;top:174.3px;width:1px;height:1px;background:#c4c4c4;"></div>
<svg style="left:316.5px;top:172px;" width="3" height="2" viewBox="0 0 3 2"><path d="M0 0H3L1.5 1.8z" fill="#cfcfcf"/></svg>
<svg style="left:326.9px;top:169.9px;" width="6" height="6.6000000000000005" viewBox="0 0 6 6.6000000000000005"><rect x="0" y="0.0" width="6" height="0.8" fill="#c4c4c4"/><rect x="0" y="2.2" width="6" height="0.8" fill="#c4c4c4"/><rect x="0" y="4.4" width="6" height="0.8" fill="#c4c4c4"/></svg>
<div class="b" style="left:324.5px;top:169.9px;width:1px;height:1px;background:#c4c4c4;"></div>
<div class="b" style="left:324.5px;top:172.1px;width:1px;height:1px;background:#c4c4c4;"></div>
<div class="b" style="left:324.5px;top:174.3px;width:1px;height:1px;background:#c4c4c4;"></div>
<svg style="left:335.09999999999997px;top:172px;" width="3" height="2" viewBox="0 0 3 2"><path d="M0 0H3L1.5 1.8z" fill="#cfcfcf"/></svg>
<svg style="left:343.9px;top:169.25px;" width="7" height="7.6" viewBox="0 0 7 7.6"><rect x="0" y="0.0" width="7" height="0.8" fill="#c4c4c4"/><rect x="0" y="1.9" width="4" height="0.8" fill="#c4c4c4"/><rect x="0" y="3.8" width="4" height="0.8" fill="#c4c4c4"/><rect x="0" y="5.7" width="7" height="0.8" fill="#c4c4c4"/></svg>
<svg style="left:355.5px;top:169.25px;" width="7" height="7.6" viewBox="0 0 7 7.6"><rect x="0" y="0.0" width="7" height="0.8" fill="#c4c4c4"/><rect x="0" y="1.9" width="4" height="0.8" fill="#c4c4c4"/><rect x="0" y="3.8" width="4" height="0.8" fill="#c4c4c4"/><rect x="0" y="5.7" width="7" height="0.8" fill="#c4c4c4"/></svg>
<svg style="left:370.6px;top:169.25px;" width="6" height="7.6" viewBox="0 0 6 7.6"><rect x="0" y="0.0" width="6" height="0.8" fill="#c4c4c4"/><rect x="0" y="1.9" width="6" height="0.8" fill="#c4c4c4"/><rect x="0" y="3.8" width="6" height="0.8" fill="#c4c4c4"/><rect x="0" y="5.7" width="6" height="0.8" fill="#c4c4c4"/></svg>
<svg style="left:368.4px;top:169px;" width="3" height="7" viewBox="0 0 3 7"><path d="M1.5 0V7M0 1.6L1.5 0L3 1.6M0 5.4L1.5 7L3 5.4" stroke="#c4c4c4" stroke-width="0.7" fill="none"/></svg>
<svg style="left:379.4px;top:172px;" width="3" height="2" viewBox="0 0 3 2"><path d="M0 0H3L1.5 1.8z" fill="#cfcfcf"/></svg>
<svg style="left:385.4px;top:164.5px;" width="8" height="8" viewBox="0 0 8 8"><rect x="0.5" y="1.4" width="6" height="6" fill="none" stroke="#c6c6c6" stroke-width="0.8"/><path d="M2 0.4V5M4 0.4V5M6 0.4V5" stroke="#c6c6c6" stroke-width="0.7"/></svg>
<svg style="left:395.4px;top:167.9px;" width="3" height="2" viewBox="0 0 3 2"><path d="M0 0H3L1.5 1.8z" fill="#cfcfcf"/></svg>
<svg style="left:385.4px;top:177px;" width="8" height="8" viewBox="0 0 8 8"><rect x="0.5" y="1.4" width="6" height="6" fill="none" stroke="#c6c6c6" stroke-width="0.8"/><path d="M2 0.4V5M4 0.4V5M6 0.4V5" stroke="#c6c6c6" stroke-width="0.7"/></svg>
<svg style="left:395.4px;top:180.4px;" width="3" height="2" viewBox="0 0 3 2"><path d="M0 0H3L1.5 1.8z" fill="#cfcfcf"/></svg>
<svg style="left:385.4px;top:189.5px;" width="8" height="8" viewBox="0 0 8 8"><rect x="0.5" y="1.4" width="6" height="6" fill="none" stroke="#c6c6c6" stroke-width="0.8"/><path d="M2 0.4V5M4 0.4V5M6 0.4V5" stroke="#c6c6c6" stroke-width="0.7"/></svg>
<svg style="left:395.4px;top:192.9px;" width="3" height="2" viewBox="0 0 3 2"><path d="M0 0H3L1.5 1.8z" fill="#cfcfcf"/></svg>
<svg style="left:306.8px;top:185.75px;" width="7" height="7.6" viewBox="0 0 7 7.6"><rect x="0" y="0.0" width="7" height="0.8" fill="#c4c4c4"/><rect x="0" y="1.9" width="4.6" height="0.8" fill="#c4c4c4"/><rect x="0" y="3.8" width="7" height="0.8" fill="#c4c4c4"/><rect x="0" y="5.7" width="4.6" height="0.8" fill="#c4c4c4"/></svg>
<svg style="left:318.5px;top:185.75px;" width="7" height="7.6" viewBox="0 0 7 7.6"><rect x="0" y="0.0" width="7" height="0.8" fill="#c4c4c4"/><rect x="0" y="1.9" width="4.6" height="0.8" fill="#c4c4c4"/><rect x="0" y="3.8" width="7" height="0.8" fill="#c4c4c4"/><rect x="0" y="5.7" width="4.6" height="0.8" fill="#c4c4c4"/></svg>
<svg style="left:330.25px;top:185.75px;" width="7" height="7.6" viewBox="0 0 7 7.6"><rect x="0" y="0.0" width="7" height="0.8" fill="#c4c4c4"/><rect x="0" y="1.9" width="4.6" height="0.8" fill="#c4c4c4"/><rect x="0" y="3.8" width="7" height="0.8" fill="#c4c4c4"/><rect x="0" y="5.7" width="4.6" height="0.8" fill="#c4c4c4"/></svg>
<svg style="left:342.0px;top:185.75px;" width="7" height="7.6" viewBox="0 0 7 7.6"><rect x="0" y="0.0" width="7" height="0.8" fill="#c4c4c4"/><rect x="0" y="1.9" width="7" height="0.8" fill="#c4c4c4"/><rect x="0" y="3.8" width="7" height="0.8" fill="#c4c4c4"/><rect x="0" y="5.7" width="7" height="0.8" fill="#c4c4c4"/></svg>
<div class="b" style="left:353px;top:184px;width:0.7px;height:10px;background:#dddddd;"></div>
<svg style="left:357.5px;top:185.75px;" width="7" height="7.6" viewBox="0 0 7 7.6"><rect x="0" y="0.0" width="7" height="0.8" fill="#c4c4c4"/><rect x="0" y="1.9" width="7" height="0.8" fill="#c4c4c4"/><rect x="0" y="3.8" width="7" height="0.8" fill="#c4c4c4"/><rect x="0" y="5.7" width="7" height="0.8" fill="#c4c4c4"/></svg>
<svg style="left:367.6px;top:188.4px;" width="3" height="2" viewBox="0 0 3 2"><path d="M0 0H3L1.5 1.8z" fill="#cfcfcf"/></svg>
<span class="t" style="left:340.60px;top:202.21px;font-size:6.6px;color:#5a5a5a;transform:scaleX(0.8973);">Абзац</span>
<svg style="left:398px;top:203px;" width="4" height="4" viewBox="0 0 4 4"><path d="M0.3 1.6V0.3H1.6M3.7 1.8V3.7H1.8M1.4 1.4L3.4 3.4" stroke="#8a8a8a" stroke-width="0.6" fill="none"/></svg>
<div class="b" style="left:406.4px;top:165px;width:70.6px;height:31.4px;background:#fff;border:0.7px solid #d4d4d4;"></div>
<div class="b" style="left:469.6px;top:165px;width:7.4px;height:31.4px;background:#f4f4f4;border:0.7px solid #d4d4d4;"></div>
<div class="b" style="left:469.6px;top:175.4px;width:7.4px;height:0.7px;background:#d4d4d4;"></div>
<div class="b" style="left:469.6px;top:185.8px;width:7.4px;height:0.7px;background:#d4d4d4;"></div>
<svg style="left:471.8px;top:179.8px;" width="3" height="2" viewBox="0 0 3 2"><path d="M0 0H3L1.5 1.8z" fill="#777"/></svg>
<svg style="left:471.8px;top:189.8px;" width="3" height="3" viewBox="0 0 3 3"><path d="M0 0.2H3" stroke="#777" stroke-width="0.6"/><path d="M0 1.2H3L1.5 3z" fill="#777"/></svg>
<svg style="left:406.4px;top:164.6px;" width="64" height="33" viewBox="0 0 64 33"><g fill="none" stroke="#5d5d5d" stroke-width="0.75"><rect x="1.2" y="2.2" width="7" height="5" fill="none"/><rect x="2.4" y="3.6" width="2.4" height="1.6"/><path d="M12 2.6L19 8.2"/><path d="M22.4 2.6L29 8.2M29 8.2V5.8M29 8.2H26.6"/><rect x="32.2" y="2.6" width="7.6" height="5.6"/><ellipse cx="47" cy="5.4" rx="4" ry="2.9"/><rect x="53.6" y="2.6" width="7.6" height="5.6" rx="1.4"/><path d="M5 13L8.6 19.2H1.4z"/><path d="M12 13.4H15V19H18.6"/><path d="M22 13.4H25V19H28.6M28.6 19L27.2 17.6M28.6 19L27.2 20.4"/><path d="M32 15H36.4V13L40.2 16.2L36.4 19.4V17.4H32z"/><path d="M45.2 12.8H48.8V16.4H50.6L47 20L43.4 16.4H45.2z"/><path d="M54 19.4V14C54 13 55 12.8 56.6 12.8H59C60.4 12.8 60.8 14 60.8 15.4V19.4z"/><path d="M2.6 24.6C5.4 24 1.8 27.4 4.4 27.2C6 27 3.2 29.4 5 31"/><path d="M11.8 25C15.6 25 18.2 26.8 18.6 30.6"/><path d="M21.8 30.4C23.6 30.4 23.6 24.8 25.4 24.8C27.2 24.8 27.2 30.4 29 30.4"/><path d="M36.8 24.4C35.4 25.2 36.6 27 35 27.6C36.6 28.2 35.4 30 36.8 30.8"/><path d="M45.4 24.4C46.8 25.2 45.6 27 47.2 27.6C45.6 28.2 46.8 30 45.4 30.8"/><path d="M57.4 24L58.4 26.6H61.2L59 28.2L59.8 31L57.4 29.4L55 31L55.8 28.2L53.6 26.6H56.4z"/></g></svg>
<svg style="left:490.5px;top:163.5px;" width="17" height="18" viewBox="0 0 17 18"><rect x="0.6" y="0.6" width="7" height="7" fill="#fff" stroke="#8f8f8f" stroke-width="0.8"/><rect x="4.4" y="4.2" width="8" height="8" fill="#f0c96f"/><rect x="9.2" y="9" width="7" height="7" fill="#fff" stroke="#8f8f8f" stroke-width="0.8"/></svg>
<span class="t" style="left:480.40px;top:184.61px;font-size:6.6px;color:#3f3f3f;transform:scaleX(0.9150);">Упорядкувати</span>
<svg style="left:497.8px;top:194.2px;" width="3" height="2" viewBox="0 0 3 2"><path d="M0 0H3L1.5 1.8z" fill="#666"/></svg>
<svg style="left:527px;top:163.5px;" width="18" height="19" viewBox="0 0 18 19"><path d="M1 4A3 3 0 0 1 4 1H14.6V12L10 16.4H4A3 3 0 0 1 1 13.4z" fill="#fff" stroke="#9a9a9a" stroke-width="0.8"/><path d="M15.4 5.6L9.2 14" stroke="#6f8cb5" stroke-width="1.6"/><path d="M7 17.6L8.2 13.4L10.6 15.2z" fill="#2f5f9f"/></svg>
<span class="t" style="left:522.40px;top:184.61px;font-size:6.6px;color:#3f3f3f;transform:scaleX(0.9159);">Експрес-</span>
<span class="t" style="left:526.70px;top:192.41px;font-size:6.6px;color:#3f3f3f;transform:scaleX(0.8294);">стилі</span>
<svg style="left:541px;top:194.2px;" width="3" height="2" viewBox="0 0 3 2"><path d="M0 0H3L1.5 1.8z" fill="#666"/></svg>
<svg style="left:551px;top:165px;" width="8" height="8" viewBox="0 0 8 8"><path d="M3.6 0.6L6.8 4.6L3.6 6.8L0.8 4.6z" fill="#fff" stroke="#6b6b6b" stroke-width="0.7"/><rect x="0.2" y="6.8" width="7.6" height="1.2" fill="#5fae4e"/></svg>
<span class="t" style="left:560.90px;top:166.81px;font-size:6.6px;color:#3f3f3f;transform:scaleX(0.8579);">Заливка фігури</span>
<svg style="left:603px;top:168.6px;" width="3" height="2" viewBox="0 0 3 2"><path d="M0 0H3L1.5 1.8z" fill="#666"/></svg>
<svg style="left:551px;top:177px;" width="8" height="8" viewBox="0 0 8 8"><rect x="0.4" y="0.4" width="6.2" height="5.6" fill="#fff" stroke="#3e72bd" stroke-width="0.8"/><path d="M7.4 0.8L3.2 5.2" stroke="#3e72bd" stroke-width="1.2"/><rect x="0.2" y="6.8" width="7.6" height="1.2" fill="#3e72bd"/></svg>
<span class="t" style="left:560.90px;top:178.61px;font-size:6.6px;color:#3f3f3f;transform:scaleX(0.8776);">Контур фігури</span>
<svg style="left:600.4px;top:180.4px;" width="3" height="2" viewBox="0 0 3 2"><path d="M0 0H3L1.5 1.8z" fill="#666"/></svg>
<svg style="left:551px;top:189.4px;" width="8" height="8" viewBox="0 0 8 8"><ellipse cx="4.4" cy="4.6" rx="3.4" ry="3" fill="#8d8d8d"/><ellipse cx="3.6" cy="3.6" rx="3.2" ry="2.8" fill="#fff" stroke="#6b6b6b" stroke-width="0.7"/></svg>
<span class="t" style="left:560.90px;top:190.71px;font-size:6.6px;color:#3f3f3f;transform:scaleX(0.8219);">Ефекти для фігур</span>
<svg style="left:607.2px;top:192.4px;" width="3" height="2" viewBox="0 0 3 2"><path d="M0 0H3L1.5 1.8z" fill="#666"/></svg>
<span class="t" style="left:492.50px;top:202.21px;font-size:6.6px;color:#5a5a5a;transform:scaleX(0.8795);">Креслення</span>
<svg style="left:613.6px;top:203px;" width="4" height="4" viewBox="0 0 4 4"><path d="M0.3 1.6V0.3H1.6M3.7 1.8V3.7H1.8M1.4 1.4L3.4 3.4" stroke="#8a8a8a" stroke-width="0.6" fill="none"/></svg>
<svg style="left:623.6px;top:165.2px;" width="8" height="8" viewBox="0 0 8 8"><circle cx="4.8" cy="3" r="2.4" fill="none" stroke="#3e72bd" stroke-width="0.9"/><path d="M3.2 4.8L0.6 7.6" stroke="#3e72bd" stroke-width="1.1"/></svg>
<span class="t" style="left:633.60px;top:166.81px;font-size:6.6px;color:#3f3f3f;transform:scaleX(0.9268);">Знайти</span>
<svg style="left:623.2px;top:177px;" width="9" height="8" viewBox="0 0 9 8"><text x="0" y="4.2" font-size="4.6" fill="#3e72bd" font-family="Liberation Sans, sans-serif">ab</text><text x="3.4" y="8" font-size="4.6" fill="#6b6b6b" font-family="Liberation Sans, sans-serif">ac</text></svg>
<span class="t" style="left:633.60px;top:178.61px;font-size:6.6px;color:#3f3f3f;transform:scaleX(0.9535);">Замінити</span>
<svg style="left:665px;top:180.4px;" width="3" height="2" viewBox="0 0 3 2"><path d="M0 0H3L1.5 1.8z" fill="#666"/></svg>
<svg style="left:624.4px;top:189.2px;" width="6" height="8" viewBox="0 0 6 8"><path d="M0.6 0.4V6L2.2 4.6L3.4 7.4L4.4 7L3.2 4.2H5.2z" fill="#fff" stroke="#6b6b6b" stroke-width="0.6"/></svg>
<span class="t" style="left:633.60px;top:190.71px;font-size:6.6px;color:#3f3f3f;transform:scaleX(0.9050);">Виділити</span>
<svg style="left:660.2px;top:192.4px;" width="3" height="2" viewBox="0 0 3 2"><path d="M0 0H3L1.5 1.8z" fill="#666"/></svg>
<span class="t" style="left:628.90px;top:202.21px;font-size:6.6px;color:#5a5a5a;transform:scaleX(0.8918);">Редагування</span>
<svg style="left:760.6px;top:203px;" width="6" height="4" viewBox="0 0 6 4"><path d="M0.5 3.5L3 0.8L5.5 3.5" stroke="#555" stroke-width="0.9" fill="none"/></svg>
<!-- ppt_body -->
<div class="b" style="left:59.8px;top:209px;width:102px;height:290.4px;background:#e9e9e9;"></div>
<div class="b" style="left:161.8px;top:209px;width:7.6px;height:290.4px;background:#dedede;"></div>
<div class="b" style="left:162.4px;top:209.6px;width:6.4px;height:7.4px;background:#fbfbfb;"></div>
<svg style="left:164.1px;top:212px;" width="3" height="2" viewBox="0 0 3 2"><path d="M0 1.8H3L1.5 0z" fill="#555"/></svg>
<div class="b" style="left:162.4px;top:219.6px;width:6.4px;height:66px;background:#ffffff;border:0.5px solid #d0d0d0;"></div>
<div class="b" style="left:162.4px;top:489.4px;width:6.4px;height:7.4px;background:#fbfbfb;"></div>
<svg style="left:164.1px;top:492.2px;" width="3" height="2" viewBox="0 0 3 2"><path d="M0 0H3L1.5 1.8z" fill="#555"/></svg>
<div class="b" style="left:169.4px;top:209px;width:2.6px;height:290.4px;background:#ececec;"></div>
<div class="b" style="left:171.6px;top:209px;width:0.8px;height:290.4px;background:#d5d5d5;"></div>
<span class="t" style="left:66.60px;top:218.97px;font-size:7.6px;color:#666;">1</span>
<span class="t" style="left:66.60px;top:273.37px;font-size:7.6px;color:#666;">2</span>
<span class="t" style="left:66.60px;top:328.77px;font-size:7.6px;color:#d9694a;">3</span>
<span class="t" style="left:66.60px;top:383.57px;font-size:7.6px;color:#666;">4</span>
<span class="t" style="left:66.60px;top:438.37px;font-size:7.6px;color:#666;">5</span>
<div class="b" style="left:74px;top:220px;width:77.4px;height:43.6px;background:#ffffff;box-shadow:0 0 0 0.5px #dcdcdc;"></div>
<svg style="left:74px;top:220px;" width="77.4" height="43.6" viewBox="0 0 77.4 43.6"><defs><filter id="bl1"><feGaussianBlur stdDeviation="0.5"/></filter></defs><rect x="3.6" y="1.6" width="40" height="1" fill="#c9b037"/><rect x="4.4" y="8.4" width="28" height="1.2" fill="#777"/><rect x="4.4" y="11" width="22" height="1.2" fill="#888"/><rect x="3.6" y="23.4" width="40" height="0.6" fill="#ddd"/><path d="M4.4 31L8 29.6L10 33L8 37.4H4.4z" fill="#3d7f86"/><rect x="9.6" y="31.6" width="14" height="1.4" fill="#8fb5ba"/><rect x="9.6" y="34.4" width="16" height="2" fill="#6aa0a6"/><g filter="url(#bl1)"><path d="M44 22C46 27 44 40 46 42H74V30C72 24 66 22 62 22z" fill="#e9e7e4"/><path d="M38 2L48 6L46 14z" fill="#b5602c"/><path d="M74 1.4L64 6L68 13z" fill="#8a4a20"/><ellipse cx="56.5" cy="12" rx="10.5" ry="9" fill="#c57a3c"/><path d="M56 3L60 14L62.6 24H52.6L54 14z" fill="#f4efe9"/><ellipse cx="58.4" cy="19" rx="5.4" ry="4.4" fill="#f2ece6"/><ellipse cx="59" cy="17.2" rx="2.2" ry="1.6" fill="#1c1716"/><circle cx="52" cy="11.4" r="1.3" fill="#1c1716"/><circle cx="65" cy="11" r="1.3" fill="#1c1716"/><path d="M52 24C56 27.6 66 26.6 70 22.4V25.4C66 29.6 56 30.6 52 27z" fill="#242424"/><path d="M31 17.4L44.6 11L49.6 21L36 27.4z" fill="#8794a6"/><path d="M32.6 20.6L46.2 14.2L47.2 16.2L33.6 22.6z" fill="#dfe5ec"/></g></svg>
<div class="b" style="left:74px;top:273.8px;width:77.4px;height:44.4px;background:#ffffff;box-shadow:0 0 0 0.5px #dcdcdc;"></div>
<svg style="left:74px;top:273.8px;" width="77.4" height="44.4" viewBox="0 0 77.4 44.4"><defs><filter id="bl2"><feGaussianBlur stdDeviation="0.6"/></filter></defs><rect x="57" y="1.6" width="17" height="4" fill="#c9d6df"/><path d="M57 2L60 1.6L60.6 5.6H57z" fill="#3d7f86"/><rect x="33" y="7.2" width="44" height="27" fill="#fdf01e"/><g filter="url(#bl2)"><rect x="1" y="7.2" width="31.6" height="27" fill="#8a7a62"/><rect x="5" y="9" width="9" height="12" fill="#b9c7d3"/><rect x="15" y="9" width="14" height="13" fill="#c9a06a"/><rect x="22" y="11" width="5" height="10" fill="#6b4a2c"/><ellipse cx="5" cy="27" rx="4.4" ry="8" fill="#4a3a2e"/><rect x="10" y="24" width="19" height="10" fill="#a89a84"/><ellipse cx="21" cy="28" rx="5" ry="3" fill="#6a6a5a"/></g><g fill="#b29a18"><rect x="42" y="12" width="24" height="1.3"/><rect x="37" y="16.8" width="38" height="1.3"/><rect x="33" y="21.6" width="43" height="1.3"/><rect x="38" y="26.4" width="33" height="1.3"/></g><rect x="27" y="36.4" width="22" height="1.2" fill="#444"/><rect x="15" y="40" width="46" height="1" fill="#888"/><rect x="69.4" y="36" width="6.4" height="6.4" fill="#777"/></svg>
<div class="b" style="left:72.4px;top:328px;width:80.4px;height:46.2px;background:#fdf1eb;border:1.8px solid #ec9070;"></div>
<div class="b" style="left:75px;top:330.8px;width:75.6px;height:41.2px;background:#000;"></div>
<div class="b" style="left:78.2px;top:332.4px;width:52px;height:39.6px;background:#ffffff;"></div>
<svg style="left:75px;top:330.8px;" width="75.6" height="41.2" viewBox="0 0 75.6 41.2"><defs><linearGradient id="g3" x1="0" y1="0" x2="0" y2="1"><stop offset="0" stop-color="#c3cfdf"/><stop offset="0.3" stop-color="#b4c6da"/><stop offset="0.34" stop-color="#5d8fc2"/><stop offset="0.7" stop-color="#3f74ad"/><stop offset="1" stop-color="#2f5c8c"/></linearGradient></defs><rect x="3.2" y="0" width="69" height="2" fill="#eceef1"/><rect x="55.4" y="2" width="16.6" height="37.6" fill="url(#g3)"/><path d="M55.4 24C58 23 59.4 28 61 31C63 35 66 30 68 27C70 25 71 26 72 26V39.6H55.4z" fill="#34502c"/><rect x="3.2" y="37.6" width="69" height="2" fill="#2a2a30"/><rect x="4.4" y="6" width="15" height="2" fill="#3a3a3a"/><g opacity="0.75"><rect x="14" y="12.4" width="11" height="0.9" fill="#7fd0c0"/><rect x="28" y="14" width="11" height="0.9" fill="#f4b6c8"/><rect x="12" y="16.6" width="9" height="0.9" fill="#eda090"/><rect x="28" y="16.8" width="9" height="0.9" fill="#e79b86"/><rect x="22" y="19.4" width="12" height="0.9" fill="#6f9fd6"/><rect x="38" y="19.4" width="9" height="0.9" fill="#bcbde8"/><rect x="14" y="23" width="9" height="0.9" fill="#6f9fd6"/><rect x="27" y="23" width="7" height="0.9" fill="#f3dc6a"/><rect x="17" y="24.8" width="14" height="0.9" fill="#e2ab78"/><rect x="29" y="26.4" width="11" height="0.9" fill="#f3dc6a"/></g><rect x="38" y="35.2" width="8" height="2" fill="#3b82e6"/><rect x="29" y="33" width="7" height="0.6" fill="#ccc"/></svg>
<div class="b" style="left:72.8px;top:383px;width:79.8px;height:45.8px;background:#ffffff;border:0.9px solid #7d7d7d;"></div>
<svg style="left:74px;top:384px;" width="77.4" height="43.6" viewBox="0 0 77.4 43.6"><rect x="6" y="2.2" width="45" height="7.6" fill="#fdf01e"/><rect x="51" y="7" width="21" height="3" fill="#fdf01e"/><rect x="57" y="1.8" width="17" height="4" fill="#c9d6df"/><path d="M57 2.2L60 1.8L60.6 5.8H57z" fill="#3d7f86"/><rect x="8" y="4.8" width="34" height="1.6" fill="#8c7f14"/><rect x="22.4" y="10" width="49.6" height="26" fill="#c2dcae"/><rect x="4.4" y="14.4" width="16.6" height="18.4" fill="#1d1d1d"/><ellipse cx="12.6" cy="21" rx="3.4" ry="4.6" fill="#bdbdbd"/><path d="M7 32.8C8 27 17 27 18.4 32.8z" fill="#8c8c8c"/><rect x="23.6" y="11.4" width="46" height="1" fill="#64785a"/><rect x="23.6" y="13.7" width="44" height="1" fill="#64785a"/><rect x="23.6" y="16.0" width="40" height="1" fill="#64785a"/><rect x="23.6" y="18.3" width="46" height="1" fill="#64785a"/><rect x="23.6" y="20.6" width="42" height="1" fill="#64785a"/><rect x="23.6" y="22.9" width="45" height="1" fill="#64785a"/><rect x="23.6" y="25.2" width="38" height="1" fill="#64785a"/><rect x="23.6" y="27.5" width="44" height="1" fill="#64785a"/><rect x="23.6" y="29.8" width="46" height="1" fill="#64785a"/><rect x="23.6" y="32.1" width="33" height="1" fill="#64785a"/></svg>
<svg style="left:122.6px;top:394.6px;" width="7" height="10" viewBox="0 0 7 10"><path d="M0.6 0.6V8L2.6 6.2L4 9.4L5.4 8.8L4 5.8H6.4z" fill="#fff" stroke="#222" stroke-width="0.7"/></svg>
<div class="b" style="left:74.5px;top:438.8px;width:76.8px;height:42.8px;background:#ffffff;box-shadow:0 0 0 0.5px #dcdcdc;"></div>
<svg style="left:74.5px;top:438.8px;" width="76.8" height="42.8" viewBox="0 0 76.8 42.8"><rect x="6" y="2.2" width="45" height="7.6" fill="#fdf01e"/><rect x="51" y="7" width="21" height="3" fill="#fdf01e"/><rect x="57" y="1.4" width="17" height="4" fill="#c9d6df"/><path d="M57 1.8L60 1.4L60.6 5.4H57z" fill="#3d7f86"/><rect x="8" y="4.4" width="26" height="1.6" fill="#6e6410"/><rect x="6" y="10" width="66" height="31" fill="#c2dcae"/><rect x="7.6" y="12.0" width="52" height="1" fill="#75896a"/><rect x="7.6" y="14.4" width="16" height="1" fill="#75896a"/><rect x="7.6" y="16.9" width="45" height="1" fill="#75896a"/><rect x="7.6" y="19.4" width="34" height="1" fill="#75896a"/><rect x="7.6" y="21.8" width="0" height="1" fill="#75896a"/><rect x="7.6" y="24.2" width="26" height="1" fill="#75896a"/><rect x="7.6" y="26.7" width="38" height="1" fill="#75896a"/><rect x="7.6" y="29.2" width="56" height="1" fill="#75896a"/><rect x="7.6" y="31.6" width="30" height="1" fill="#75896a"/><rect x="7.6" y="34.0" width="0" height="1" fill="#75896a"/><rect x="7.6" y="36.5" width="60" height="1" fill="#75896a"/><rect x="7.6" y="39.0" width="62" height="1" fill="#75896a"/></svg>
<div class="b" style="left:74.5px;top:493.4px;width:76.8px;height:6px;background:#ffffff;"></div>
<div class="b" style="left:80.5px;top:495.6px;width:50px;height:3.8px;background:#fdf01e;"></div>
<div class="b" style="left:131.5px;top:494.8px;width:17px;height:3.6px;background:#c9d6df;"></div>
<span class="t" style="left:66.60px;top:494.97px;font-size:7.6px;color:#666;clip-path:inset(0 0 28% 0);">6</span>
<div class="b" style="left:763.6px;top:209px;width:7.4px;height:271.4px;background:#dedede;"></div>
<div class="b" style="left:764.2px;top:209.6px;width:6.2px;height:7.4px;background:#fbfbfb;"></div>
<svg style="left:765.8px;top:212px;" width="3" height="2" viewBox="0 0 3 2"><path d="M0 1.8H3L1.5 0z" fill="#555"/></svg>
<div class="b" style="left:764.2px;top:248.4px;width:6.2px;height:9.6px;background:#ffffff;border:0.5px solid #cfcfcf;"></div>
<div class="b" style="left:764.2px;top:444.8px;width:6.2px;height:7.4px;background:#fbfbfb;"></div>
<svg style="left:765.8px;top:447.6px;" width="3" height="2" viewBox="0 0 3 2"><path d="M0 0H3L1.5 1.8z" fill="#444"/></svg>
<svg style="left:765.4px;top:454.6px;" width="4" height="5" viewBox="0 0 4 5"><path d="M0 0.4H4M0 1.6H4" stroke="#777" stroke-width="0.6"/><path d="M0.2 2.6H3.8L2 4.8z" fill="#777"/></svg>
<svg style="left:765.4px;top:463.4px;" width="4" height="5" viewBox="0 0 4 5"><path d="M0 0.4H4M0 1.6H4" stroke="#777" stroke-width="0.6"/><path d="M0.2 2.6H3.8L2 4.8z" fill="#777"/></svg>
<div class="b" style="left:172.4px;top:480.6px;width:598.6px;height:0.8px;background:#d0d0d0;"></div>
<div class="b" style="left:172.4px;top:481.4px;width:598.6px;height:18px;background:#ebebeb;"></div>
<span class="t" style="left:178.60px;top:485.92px;font-size:8.6px;color:#666;transform:scaleX(0.8667);">Нотатки до слайда</span>
<div class="b" style="left:59.8px;top:499.4px;width:711.2px;height:9.8px;background:#f1f1f1;border-top:0.8px solid #d5d5d5;"></div>
<span class="t" style="left:64.00px;top:501.57px;font-size:6.3px;color:#5a5a5a;transform:scaleX(0.8682);">Слайд 3 з 21</span>
<svg style="left:107.6px;top:501.4px;" width="8" height="7" viewBox="0 0 8 7"><rect x="0.4" y="0.6" width="4.6" height="5.6" fill="none" stroke="#777" stroke-width="0.7"/><path d="M5 1.4H7.4V6.2H5M1.6 2.4H3.8M1.6 4H3.8" stroke="#777" stroke-width="0.6" fill="none"/></svg>
<span class="t" style="left:123.40px;top:501.57px;font-size:6.3px;color:#5a5a5a;transform:scaleX(0.9558);">українська</span>
<svg style="left:502.8px;top:501.6px;" width="6" height="6" viewBox="0 0 6 6"><path d="M0.4 5.6H5.6M1 4.2H5M3 0.4V3M1.8 1.6L3 0.4L4.2 1.6" stroke="#666" stroke-width="0.7" fill="none"/></svg>
<span class="t" style="left:510.80px;top:501.57px;font-size:6.3px;color:#5a5a5a;transform:scaleX(1.0071);">Нотатки</span>
<svg style="left:543.6px;top:501.6px;" width="7" height="6" viewBox="0 0 7 6"><path d="M0.4 0.4H6.6V4.2H3.4L1.8 5.8V4.2H0.4z" fill="#555"/></svg>
<span class="t" style="left:552.00px;top:501.57px;font-size:6.3px;color:#5a5a5a;transform:scaleX(1.0364);">Примітки</span>
<div class="b" style="left:589.6px;top:500.2px;width:19.6px;height:9px;background:#cfcfcf;"></div>
<svg style="left:595.4px;top:501.4px;" width="8" height="7" viewBox="0 0 8 7"><rect x="0.4" y="0.4" width="7.2" height="6.2" fill="none" stroke="#555" stroke-width="0.7"/><path d="M2.6 0.4V6.6M2.6 3.2H7.6" stroke="#555" stroke-width="0.6"/></svg>
<svg style="left:615.4px;top:501.4px;" width="8" height="7" viewBox="0 0 8 7"><g fill="none" stroke="#666" stroke-width="0.6"><rect x="0.4" y="0.4" width="3" height="2.4"/><rect x="4.6" y="0.4" width="3" height="2.4"/><rect x="0.4" y="4" width="3" height="2.4"/><rect x="4.6" y="4" width="3" height="2.4"/></g></svg>
<svg style="left:634.8px;top:501.4px;" width="8" height="7" viewBox="0 0 8 7"><path d="M0.4 0.6H3.8V6.4H0.4zM4.2 0.6H7.6V6.4H4.2zM5 2H6.8M5 3.4H6.8M5 4.8H6.8" fill="none" stroke="#666" stroke-width="0.6"/></svg>
<svg style="left:654.6px;top:501.4px;" width="8" height="7" viewBox="0 0 8 7"><path d="M0.4 0.6H7.6M1 0.6V4H7V0.6M4 4V5.6M2.4 6.4H5.6" fill="none" stroke="#555" stroke-width="0.7"/></svg>
<div class="b" style="left:670.6px;top:504.6px;width:3px;height:0.8px;background:#555;"></div>
<div class="b" style="left:676.4px;top:504.7px;width:51px;height:0.6px;background:#9a9a9a;"></div>
<div class="b" style="left:693px;top:501.8px;width:1.6px;height:6.4px;background:#555;"></div>
<div class="b" style="left:701.8px;top:503.6px;width:0.6px;height:2.8px;background:#9a9a9a;"></div>
<svg style="left:730.2px;top:502.8px;" width="4.4" height="4.4" viewBox="0 0 4.4 4.4"><path d="M0 2.2H4.4M2.2 0V4.4" stroke="#444" stroke-width="0.9"/></svg>
<span class="t" style="left:742.00px;top:501.57px;font-size:6.3px;color:#5a5a5a;transform:scaleX(0.9211);">69%</span>
<svg style="left:760.2px;top:501.4px;" width="7" height="7" viewBox="0 0 7 7"><rect x="0.4" y="0.4" width="6.2" height="6.2" fill="none" stroke="#666" stroke-width="0.6" stroke-dasharray="1.4 1"/><path d="M2 2L5 5M5 2L2 5" stroke="#666" stroke-width="0.6"/></svg>
<!-- slide -->
<div class="b" style="left:223.2px;top:209px;width:489.59999999999997px;height:270.8px;background:#ffffff;"></div>
<div class="b" style="left:223.2px;top:209px;width:489.59999999999997px;height:10.2px;background:#dfe2e7;"></div>
<div class="b" style="left:312.3px;top:210px;width:85px;height:9.4px;background:#ffffff;border-radius:2.5px 2.5px 0 0;"></div>
<svg style="left:229.6px;top:211.2px;" width="6" height="5" viewBox="0 0 6 5"><rect x="0" y="0.4" width="4.2" height="4.2" rx="0.6" fill="#1e9e4a"/><path d="M4.2 2L6 0.8V4.2L4.2 3z" fill="#0b7a34"/><rect x="1" y="1.4" width="2" height="2.2" fill="#fff"/></svg>
<span class="t" style="left:238.40px;top:211.71px;font-size:4.6px;color:#6a6e73;transform:scaleX(0.9907);">Meet - mzg-ojrw-iuy</span>
<div class="b" style="left:296.8px;top:212.4px;width:3.4px;height:3.4px;background:#d93025;border-radius:50%;"></div>
<svg style="left:304.9px;top:212.6px;" width="3" height="3" viewBox="0 0 3 3"><path d="M0.3 0.3L2.7 2.7M2.7 0.3L0.3 2.7" stroke="#444" stroke-width="0.7"/></svg>
<svg style="left:316.4px;top:211.2px;" width="5.4" height="5.4" viewBox="0 0 5.4 5.4"><path d="M0.2 5V2.6L2.4 1.2V5z" fill="#ff5a6e"/><path d="M2.9 5V1.9L5.2 0.2V5z" fill="#196cff"/></svg>
<span class="t" style="left:325.40px;top:211.71px;font-size:4.6px;color:#4a4d52;transform:scaleX(0.9383);">Криза - це - Mentimeter</span>
<svg style="left:390.3px;top:212.6px;" width="3" height="3" viewBox="0 0 3 3"><path d="M0.3 0.3L2.7 2.7M2.7 0.3L0.3 2.7" stroke="#333" stroke-width="0.7"/></svg>
<svg style="left:403.6px;top:212.2px;" width="4" height="4" viewBox="0 0 4 4"><path d="M2 0.2V3.8M0.2 2H3.8" stroke="#333" stroke-width="0.8"/></svg>
<svg style="left:653.6px;top:212px;" width="3.6" height="2.2" viewBox="0 0 3.6 2.2"><path d="M0.2 0.3L1.8 1.9L3.4 0.3" stroke="#666" stroke-width="0.6" fill="none"/></svg>
<div class="b" style="left:669.6px;top:213px;width:3.4px;height:0.6px;background:#555;"></div>
<svg style="left:686.2px;top:211.2px;" width="3.6" height="3.6" viewBox="0 0 3.6 3.6"><rect x="0.3" y="0.9" width="2.4" height="2.4" fill="none" stroke="#333" stroke-width="0.7"/><path d="M1 0.9V0.3H3.3V2.6H2.7" fill="none" stroke="#333" stroke-width="0.5"/></svg>
<svg style="left:702.8px;top:211.3px;" width="3.4" height="3.4" viewBox="0 0 3.4 3.4"><path d="M0.3 0.3L3.1 3.1M3.1 0.3L0.3 3.1" stroke="#444" stroke-width="0.6"/></svg>
<div class="b" style="left:223.2px;top:219.2px;width:489.59999999999997px;height:14px;background:#ffffff;"></div>
<div class="b" style="left:263.8px;top:221px;width:426px;height:10.2px;background:#f1f3f4;border-radius:5px;"></div>
<svg style="left:229.2px;top:224px;" width="5" height="4.6" viewBox="0 0 5 4.6"><path d="M4.8 2.3H0.6M2.4 0.4L0.5 2.3L2.4 4.2" stroke="#444" stroke-width="0.7" fill="none"/></svg>
<svg style="left:241px;top:224px;" width="5" height="4.6" viewBox="0 0 5 4.6"><path d="M0.2 2.3H4.4M2.6 0.4L4.5 2.3L2.6 4.2" stroke="#c4c7cb" stroke-width="0.7" fill="none"/></svg>
<svg style="left:251.6px;top:223.8px;" width="5" height="5" viewBox="0 0 5 5"><path d="M4.2 1.5A2 2 0 1 0 4.5 3" stroke="#444" stroke-width="0.7" fill="none"/><path d="M4.8 0.2V2H3z" fill="#444"/></svg>
<svg style="left:266.8px;top:224px;" width="3" height="4.4" viewBox="0 0 3 4.4"><rect x="0" y="1.8" width="3" height="2.6" fill="#555"/><path d="M0.7 1.9V1.2a0.8 0.8 0 0 1 1.6 0V1.9" stroke="#555" stroke-width="0.5" fill="none"/></svg>
<span class="t" style="left:273.60px;top:223.91px;font-size:4.6px;color:#2a2c30;transform:scaleX(1.0995);">mentimeter.com</span>
<span class="t" style="left:309.59px;top:223.91px;font-size:4.6px;color:#8a8e94;transform:scaleX(1.0995);">/app/presentation/a1324e33e7716eacf0fca26db65b9eb3b0f54a4e6299</span>
<svg style="left:653.4px;top:224px;" width="5" height="4.6" viewBox="0 0 5 4.6"><path d="M1.4 1.6H0.4V4.2H4V3.2M1.6 3C1.8 1.9 2.6 1.4 3.4 1.4V0.5L4.8 1.8L3.4 3.1V2.3C2.6 2.3 2 2.5 1.6 3z" stroke="#9a9ea3" stroke-width="0.5" fill="none"/></svg>
<svg style="left:665px;top:223.8px;" width="5" height="5" viewBox="0 0 5 5"><path d="M2.5 0.4L3.2 1.9L4.8 2.1L3.6 3.2L3.9 4.8L2.5 4L1.1 4.8L1.4 3.2L0.2 2.1L1.8 1.9z" fill="none" stroke="#555" stroke-width="0.5"/></svg>
<svg style="left:679.4px;top:224.2px;" width="4.6" height="4.2" viewBox="0 0 4.6 4.2"><rect x="0.3" y="0.3" width="4" height="3.6" fill="none" stroke="#333" stroke-width="0.7"/><rect x="2.6" y="0.3" width="1.7" height="3.6" fill="#333"/></svg>
<svg style="left:690.2px;top:223px;" width="6.6" height="6.6" viewBox="0 0 6.6 6.6"><circle cx="3.3" cy="3.3" r="3.3" fill="#c98f7c"/><ellipse cx="3.3" cy="3" rx="1.7" ry="2.3" fill="#5a3326"/><ellipse cx="3.3" cy="6.6" rx="2.4" ry="1.6" fill="#8e3a3a"/></svg>
<div class="b" style="left:704.5px;top:224.25px;width:0.8px;height:0.8px;background:#555;border-radius:50%;"></div>
<div class="b" style="left:704.5px;top:225.85px;width:0.8px;height:0.8px;background:#555;border-radius:50%;"></div>
<div class="b" style="left:704.5px;top:227.45px;width:0.8px;height:0.8px;background:#555;border-radius:50%;"></div>
<div class="b" style="left:223.2px;top:233.2px;width:35.8px;height:235.4px;background:#000000;"></div>
<div class="b" style="left:677.2px;top:233.2px;width:35.59999999999991px;height:235.4px;background:#000000;"></div>
<span class="t" style="left:381.00px;top:237.67px;font-size:7.6px;color:#2e2e2e;transform:scaleX(1.0097);">Go to www.menti.com and use the code 8494 7862</span>
<span class="t" style="left:266.80px;top:261.76px;font-size:18.6px;color:#26262b;font-weight:700;transform:scaleX(0.9848);">Криза - це</span>
<span class="t" style="left:328.90px;top:305.58px;font-size:9.4px;color:#4cc3ad;transform:scaleX(0.9618);-webkit-text-stroke:0.25px #4cc3ad;">відсутність чогось</span>
<span class="t" style="left:418.00px;top:316.88px;font-size:9.4px;color:#f2a9c0;transform:scaleX(0.9559);-webkit-text-stroke:0.25px #f2a9c0;">можливість шанс</span>
<span class="t" style="left:424.00px;top:327.58px;font-size:9.4px;color:#3fc4a0;transform:scaleX(0.9710);-webkit-text-stroke:0.25px #3fc4a0;">проблема</span>
<span class="t" style="left:316.60px;top:332.98px;font-size:9.4px;color:#ea8d7c;transform:scaleX(0.9470);-webkit-text-stroke:0.25px #ea8d7c;">ліміт ресурсів</span>
<span class="t" style="left:407.40px;top:338.38px;font-size:9.4px;color:#e1826c;transform:scaleX(0.9551);-webkit-text-stroke:0.25px #e1826c;">ступор провал</span>
<span class="t" style="left:376.60px;top:351.08px;font-size:9.4px;color:#4585cf;transform:scaleX(0.9539);-webkit-text-stroke:0.25px #4585cf;">деструктивні зміни</span>
<span class="t" style="left:474.80px;top:351.08px;font-size:9.4px;color:#a9abe3;transform:scaleX(0.9591);-webkit-text-stroke:0.25px #a9abe3;">зупинка роботи</span>
<span class="t" style="left:386.00px;top:363.78px;font-size:9.4px;color:#f4a3bf;transform:scaleX(0.9376);-webkit-text-stroke:0.25px #f4a3bf;">земля іде з-під ніг</span>
<span class="t" style="left:335.70px;top:374.98px;font-size:9.4px;color:#437fc6;transform:scaleX(0.9509);-webkit-text-stroke:0.25px #437fc6;">втрата опори</span>
<span class="t" style="left:407.40px;top:374.98px;font-size:9.4px;color:#f6d64a;transform:scaleX(0.9585);-webkit-text-stroke:0.25px #f6d64a;">нестійкість</span>
<span class="t" style="left:351.80px;top:385.68px;font-size:9.4px;color:#dd9a5c;transform:scaleX(0.9550);-webkit-text-stroke:0.25px #dd9a5c;">розпач розгубленість</span>
<span class="t" style="left:413.30px;top:395.08px;font-size:9.4px;color:#f7d867;transform:scaleX(0.9530);-webkit-text-stroke:0.25px #f7d867;">нестача ресурсів</span>
<span class="t" style="left:374.39px;top:328.70px;font-size:9.4px;color:#a3a8e0;-webkit-text-stroke:0.2px #a3a8e0;transform-origin:50% 50%;transform:rotate(-90deg) scaleX(0.9598);">розпад</span>
<svg style="left:572.9px;top:233.2px;" width="104.2" height="234.6" viewBox="0 0 104.2 234.6"><defs><linearGradient id="sky" x1="0" y1="0" x2="0" y2="1"><stop offset="0" stop-color="#e6ebf3"/><stop offset="0.18" stop-color="#e3e9f2"/><stop offset="0.215" stop-color="#a9c3e2"/><stop offset="0.5" stop-color="#bdd0e6"/><stop offset="0.85" stop-color="#bfcee2"/><stop offset="1" stop-color="#acc2dc"/></linearGradient><linearGradient id="sea" x1="0" y1="0" x2="0" y2="1"><stop offset="0" stop-color="#7fa6d3"/><stop offset="0.1" stop-color="#6497d0"/><stop offset="0.3" stop-color="#4885c8"/><stop offset="0.55" stop-color="#3a72bd"/><stop offset="1" stop-color="#3468b4"/></linearGradient><filter id="pb1" x="-20%" y="-50%" width="140%" height="200%"><feGaussianBlur stdDeviation="2"/></filter><filter id="pb2" x="-10%" y="-10%" width="120%" height="120%"><feGaussianBlur stdDeviation="0.8"/></filter><filter id="pb3" x="-10%" y="-10%" width="120%" height="120%"><feGaussianBlur stdDeviation="1.6"/></filter><clipPath id="pcl"><rect x="0" y="0" width="104.2" height="234.6"/></clipPath></defs><g clip-path="url(#pcl)"><rect x="0" y="0" width="104.2" height="72.4" fill="url(#sky)"/><g filter="url(#pb1)"><ellipse cx="86" cy="21" rx="22" ry="5.5" fill="#7aa6dc"/><ellipse cx="62" cy="27" rx="16" ry="3" fill="#92b4de"/><ellipse cx="28" cy="22" rx="30" ry="5" fill="#e4eaf2"/><ellipse cx="20" cy="33" rx="28" ry="4" fill="#eef1f6"/><ellipse cx="66" cy="37" rx="44" ry="4.4" fill="#eaeef4"/><ellipse cx="40" cy="47" rx="52" ry="4.4" fill="#f0f3f7"/><ellipse cx="88" cy="49" rx="24" ry="3.5" fill="#e2e8f1"/><ellipse cx="16" cy="56" rx="24" ry="3" fill="#d6e0ec"/><ellipse cx="60" cy="59" rx="50" ry="3.2" fill="#e6ebf2"/><ellipse cx="50" cy="66.5" rx="60" ry="2.2" fill="#cbd7e7"/><ellipse cx="8" cy="42" rx="12" ry="3" fill="#a9c3e2"/><ellipse cx="96" cy="34" rx="10" ry="3" fill="#9fbde2"/></g><rect x="0" y="72" width="104.2" height="162.6" fill="url(#sea)"/><rect x="0" y="70.4" width="104.2" height="2.2" fill="#88a3c8" opacity="0.85"/><g filter="url(#pb2)"><path d="M70 116C78 112.6 92 110 105 109.4V124.6C94 124.2 80 121.6 70 116z" fill="#65add4"/><path d="M86 116C93 113.6 99 113 105 113V121.6C98 121.2 92 119.6 86 116z" fill="#7cc0d8"/></g><rect x="22.4" y="82.9" width="76.2" height="0.7" fill="#2a58a4" opacity="0.22"/><rect x="20.3" y="86.8" width="59.4" height="0.7" fill="#2a58a4" opacity="0.22"/><rect x="20.5" y="90.2" width="61.5" height="0.7" fill="#2a58a4" opacity="0.22"/><rect x="3.8" y="95.3" width="45.2" height="0.7" fill="#2a58a4" opacity="0.22"/><rect x="32.4" y="97.8" width="64.7" height="0.7" fill="#2a58a4" opacity="0.22"/><rect x="39.3" y="101.6" width="78.2" height="0.7" fill="#2a58a4" opacity="0.22"/><rect x="24.6" y="106.7" width="37.9" height="0.7" fill="#2a58a4" opacity="0.22"/><rect x="21.1" y="109.3" width="33.0" height="0.7" fill="#2a58a4" opacity="0.22"/><rect x="9.7" y="113.6" width="31.5" height="0.7" fill="#2a58a4" opacity="0.22"/><rect x="17.6" y="118.0" width="72.1" height="0.7" fill="#2a58a4" opacity="0.22"/><rect x="25.6" y="122.0" width="55.0" height="0.7" fill="#2a58a4" opacity="0.22"/><rect x="18.3" y="126.2" width="43.9" height="0.7" fill="#2a58a4" opacity="0.22"/><rect x="39.8" y="130.8" width="72.0" height="0.7" fill="#2a58a4" opacity="0.22"/><rect x="12.6" y="134.1" width="41.5" height="0.7" fill="#2a58a4" opacity="0.22"/><rect x="2.8" y="137.2" width="68.3" height="0.7" fill="#2a58a4" opacity="0.22"/><rect x="33.9" y="141.3" width="49.3" height="0.7" fill="#2a58a4" opacity="0.22"/><rect x="33.9" y="146.3" width="30.0" height="0.7" fill="#2a58a4" opacity="0.22"/><rect x="36.4" y="148.7" width="53.5" height="0.7" fill="#2a58a4" opacity="0.22"/><rect x="15.9" y="154.2" width="33.7" height="0.7" fill="#2a58a4" opacity="0.22"/><rect x="31.1" y="157.4" width="43.5" height="0.7" fill="#2a58a4" opacity="0.22"/><rect x="13.3" y="160.2" width="78.2" height="0.7" fill="#2a58a4" opacity="0.22"/><rect x="4.7" y="165.4" width="42.3" height="0.7" fill="#2a58a4" opacity="0.22"/><rect x="2.4" y="168.0" width="69.9" height="0.7" fill="#2a58a4" opacity="0.22"/><rect x="22.4" y="172.1" width="52.4" height="0.7" fill="#2a58a4" opacity="0.22"/><rect x="29.3" y="176.0" width="36.5" height="0.7" fill="#2a58a4" opacity="0.22"/><rect x="4.7" y="180.8" width="51.0" height="0.7" fill="#2a58a4" opacity="0.22"/><rect x="10.8" y="183.8" width="78.5" height="0.7" fill="#2a58a4" opacity="0.22"/><rect x="12.2" y="188.9" width="74.2" height="0.7" fill="#2a58a4" opacity="0.22"/><rect x="15.8" y="191.6" width="72.7" height="0.7" fill="#2a58a4" opacity="0.22"/><rect x="4.0" y="196.4" width="79.5" height="0.7" fill="#2a58a4" opacity="0.22"/><rect x="10.3" y="199.4" width="68.6" height="0.7" fill="#2a58a4" opacity="0.22"/><rect x="11.9" y="203.6" width="33.7" height="0.7" fill="#2a58a4" opacity="0.22"/><rect x="23.3" y="207.0" width="42.2" height="0.7" fill="#2a58a4" opacity="0.22"/><rect x="14.9" y="211.9" width="52.7" height="0.7" fill="#2a58a4" opacity="0.22"/><g filter="url(#pb2)"><path d="M-6 129.8H0" fill="none"/><path d="M-6 250V128L0 129.8C4 131 6 138 9 142C13 146 13 149 15.7 149.8C20 152 22 158 27 161.8C30 166 30 178 31 185.8C33 194 36 200 39 204.4C42 206.6 44 207 46 206.8C49 203 51 196 53 190.3C57 184 63 182 67.6 178.5C70 170 68 162 70 154.8C74 150 80 149 86 147.8C92 147 98 148.6 104.2 149.8H112V250z" fill="#243a1f"/><path d="M-6 140H0C8 150 16 168 24 190C30 206 38 220 46 250H-6z" fill="#1a2c1b"/><path d="M56 250C58 214 66 198 74 186C82 172 92 160 104.2 156H112V250z" fill="#3a5229"/></g><g filter="url(#pb2)" opacity="0.92"><circle cx="99.8" cy="182.2" r="1.8" fill="#1b2d1d"/><circle cx="23.8" cy="196.4" r="2.1" fill="#3f582c"/><circle cx="20.4" cy="234.4" r="2.4" fill="#2a3e22"/><circle cx="4.9" cy="140.2" r="1.7" fill="#2a3e22"/><circle cx="26.7" cy="220.3" r="1.8" fill="#1b2d1d"/><circle cx="96.6" cy="237.4" r="0.9" fill="#3f582c"/><circle cx="95.4" cy="150.8" r="0.7" fill="#778c50"/><circle cx="29.3" cy="187.5" r="2.5" fill="#637c43"/><circle cx="92.7" cy="237.8" r="1.9" fill="#1b2d1d"/><circle cx="61.3" cy="231.4" r="1.6" fill="#4a6432"/><circle cx="66.2" cy="182.0" r="2.1" fill="#55703a"/><circle cx="7.8" cy="189.2" r="2.1" fill="#1b2d1d"/><circle cx="82.5" cy="230.5" r="1.4" fill="#14221a"/><circle cx="90.6" cy="174.7" r="2.2" fill="#14221a"/><circle cx="60.6" cy="196.2" r="0.9" fill="#22361e"/><circle cx="91.5" cy="209.6" r="1.4" fill="#2a3e22"/><circle cx="45.8" cy="221.9" r="0.9" fill="#14221a"/><circle cx="2.3" cy="235.2" r="0.9" fill="#2a3e22"/><circle cx="31.3" cy="204.0" r="1.1" fill="#4a6432"/><circle cx="68.6" cy="177.5" r="2.4" fill="#4a6432"/><circle cx="20.6" cy="176.3" r="2.2" fill="#1b2d1d"/><circle cx="51.6" cy="221.8" r="2.3" fill="#22361e"/><circle cx="49.0" cy="231.7" r="2.3" fill="#3f582c"/><circle cx="87.3" cy="238.0" r="1.6" fill="#55703a"/><circle cx="28.9" cy="196.0" r="2.0" fill="#22361e"/><circle cx="32.1" cy="216.6" r="0.7" fill="#778c50"/><circle cx="19.8" cy="214.2" r="1.2" fill="#14221a"/><circle cx="11.3" cy="188.0" r="1.9" fill="#14221a"/><circle cx="1.1" cy="180.9" r="2.1" fill="#4a6432"/><circle cx="81.0" cy="188.4" r="2.5" fill="#1b2d1d"/><circle cx="40.9" cy="216.7" r="2.4" fill="#778c50"/><circle cx="13.5" cy="178.8" r="1.9" fill="#2a3e22"/><circle cx="57.2" cy="201.1" r="1.7" fill="#22361e"/><circle cx="21.3" cy="208.9" r="2.3" fill="#14221a"/><circle cx="22.2" cy="228.8" r="2.6" fill="#22361e"/><circle cx="27.2" cy="208.4" r="0.7" fill="#14221a"/><circle cx="79.9" cy="182.6" r="0.8" fill="#14221a"/><circle cx="55.4" cy="204.9" r="2.4" fill="#3f582c"/><circle cx="93.7" cy="186.0" r="2.0" fill="#778c50"/><circle cx="60.2" cy="205.2" r="2.1" fill="#3f582c"/><circle cx="30.2" cy="209.6" r="1.9" fill="#22361e"/><circle cx="87.9" cy="228.9" r="1.1" fill="#22361e"/><circle cx="100.8" cy="185.8" r="1.5" fill="#14221a"/><circle cx="51.1" cy="205.4" r="0.8" fill="#2a3e22"/><circle cx="95.8" cy="217.6" r="1.5" fill="#778c50"/><circle cx="13.2" cy="176.6" r="2.2" fill="#2a3e22"/><circle cx="27.1" cy="206.6" r="2.6" fill="#637c43"/><circle cx="23.6" cy="204.9" r="1.3" fill="#2a3e22"/><circle cx="10.9" cy="209.9" r="0.9" fill="#22361e"/><circle cx="74.6" cy="206.6" r="2.4" fill="#778c50"/><circle cx="85.8" cy="197.0" r="1.7" fill="#1b2d1d"/><circle cx="55.1" cy="223.3" r="1.9" fill="#1b2d1d"/><circle cx="95.1" cy="198.3" r="1.4" fill="#3f582c"/><circle cx="32.8" cy="231.3" r="1.1" fill="#14221a"/><circle cx="13.9" cy="154.8" r="2.1" fill="#14221a"/><circle cx="45.2" cy="233.4" r="1.7" fill="#1b2d1d"/><circle cx="1.8" cy="150.5" r="2.0" fill="#22361e"/><circle cx="12.0" cy="184.6" r="2.1" fill="#1b2d1d"/><circle cx="83.5" cy="182.0" r="0.7" fill="#2a3e22"/><circle cx="21.2" cy="222.1" r="2.6" fill="#14221a"/><circle cx="10.1" cy="171.8" r="1.5" fill="#1b2d1d"/><circle cx="72.9" cy="222.6" r="1.0" fill="#4a6432"/><circle cx="17.2" cy="185.4" r="0.7" fill="#2a3e22"/><circle cx="79.3" cy="159.3" r="0.9" fill="#1b2d1d"/><circle cx="84.7" cy="173.4" r="2.4" fill="#22361e"/><circle cx="79.8" cy="213.7" r="1.5" fill="#14221a"/><circle cx="82.9" cy="161.8" r="0.9" fill="#14221a"/><circle cx="24.1" cy="233.8" r="2.0" fill="#2a3e22"/><circle cx="59.2" cy="187.7" r="1.4" fill="#1b2d1d"/><circle cx="72.9" cy="213.3" r="2.6" fill="#3f582c"/><circle cx="11.2" cy="154.5" r="1.5" fill="#1b2d1d"/><circle cx="57.1" cy="202.9" r="2.5" fill="#637c43"/><circle cx="40.1" cy="236.6" r="2.3" fill="#14221a"/><circle cx="96.7" cy="202.3" r="2.1" fill="#637c43"/><circle cx="60.9" cy="198.9" r="1.5" fill="#14221a"/><circle cx="93.3" cy="211.8" r="0.8" fill="#22361e"/><circle cx="7.6" cy="229.4" r="1.5" fill="#1b2d1d"/><circle cx="4.7" cy="139.0" r="2.2" fill="#1b2d1d"/><circle cx="101.8" cy="219.5" r="1.8" fill="#3f582c"/><circle cx="89.6" cy="168.0" r="1.0" fill="#637c43"/><circle cx="69.5" cy="179.0" r="1.2" fill="#2a3e22"/><circle cx="37.9" cy="211.3" r="2.2" fill="#4a6432"/><circle cx="76.4" cy="154.7" r="0.9" fill="#22361e"/><circle cx="28.6" cy="196.3" r="2.1" fill="#1b2d1d"/><circle cx="65.8" cy="212.4" r="1.1" fill="#637c43"/><circle cx="6.3" cy="158.3" r="1.5" fill="#14221a"/><circle cx="78.6" cy="230.2" r="1.0" fill="#4a6432"/><circle cx="13.9" cy="225.4" r="2.2" fill="#1b2d1d"/><circle cx="46.2" cy="211.7" r="1.4" fill="#637c43"/><circle cx="68.0" cy="238.8" r="1.3" fill="#1b2d1d"/><circle cx="10.1" cy="226.0" r="0.8" fill="#3f582c"/><circle cx="59.1" cy="219.3" r="1.6" fill="#14221a"/><circle cx="7.9" cy="151.9" r="2.0" fill="#4a6432"/><circle cx="51.5" cy="213.6" r="1.3" fill="#1b2d1d"/><circle cx="37.2" cy="209.3" r="1.4" fill="#778c50"/><circle cx="59.2" cy="230.9" r="2.5" fill="#2a3e22"/><circle cx="55.1" cy="239.1" r="1.6" fill="#3f582c"/><circle cx="25.8" cy="168.5" r="1.4" fill="#2a3e22"/><circle cx="60.8" cy="217.2" r="2.1" fill="#778c50"/><circle cx="56.2" cy="221.7" r="1.8" fill="#778c50"/><circle cx="91.6" cy="159.5" r="0.7" fill="#1b2d1d"/><circle cx="59.0" cy="236.2" r="1.9" fill="#14221a"/><circle cx="84.9" cy="175.3" r="2.1" fill="#3f582c"/><circle cx="36.4" cy="218.4" r="1.3" fill="#778c50"/><circle cx="55.9" cy="208.7" r="2.0" fill="#2a3e22"/><circle cx="78.7" cy="238.4" r="1.4" fill="#778c50"/><circle cx="86.7" cy="227.5" r="2.5" fill="#22361e"/><circle cx="73.8" cy="217.9" r="1.5" fill="#637c43"/><circle cx="66.1" cy="204.6" r="1.3" fill="#3f582c"/><circle cx="30.4" cy="236.6" r="0.8" fill="#14221a"/><circle cx="95.7" cy="230.2" r="2.1" fill="#778c50"/><circle cx="11.3" cy="148.7" r="1.1" fill="#778c50"/><circle cx="19.2" cy="159.5" r="1.0" fill="#22361e"/><circle cx="65.2" cy="233.5" r="1.7" fill="#2a3e22"/><circle cx="92.3" cy="230.4" r="1.3" fill="#14221a"/><circle cx="5.2" cy="234.1" r="2.2" fill="#22361e"/><circle cx="96.1" cy="227.9" r="2.4" fill="#2a3e22"/><circle cx="82.9" cy="207.9" r="1.9" fill="#637c43"/><circle cx="94.4" cy="218.7" r="0.9" fill="#22361e"/><circle cx="21.2" cy="230.6" r="1.0" fill="#4a6432"/><circle cx="28.1" cy="208.3" r="0.9" fill="#2a3e22"/><circle cx="8.6" cy="211.8" r="1.7" fill="#14221a"/><circle cx="82.1" cy="174.7" r="2.4" fill="#778c50"/><circle cx="21.7" cy="188.9" r="1.7" fill="#4a6432"/><circle cx="57.9" cy="239.7" r="2.0" fill="#55703a"/><circle cx="100.6" cy="220.9" r="1.9" fill="#778c50"/><circle cx="74.0" cy="181.2" r="1.3" fill="#55703a"/><circle cx="89.0" cy="222.6" r="2.1" fill="#1b2d1d"/><circle cx="20.8" cy="209.9" r="1.3" fill="#2a3e22"/><circle cx="75.3" cy="165.1" r="2.3" fill="#637c43"/><circle cx="48.2" cy="206.8" r="0.9" fill="#55703a"/><circle cx="45.1" cy="214.4" r="1.3" fill="#1b2d1d"/><circle cx="67.3" cy="213.9" r="2.3" fill="#4a6432"/><circle cx="95.8" cy="197.8" r="2.1" fill="#22361e"/><circle cx="102.1" cy="216.4" r="2.0" fill="#14221a"/><circle cx="10.7" cy="207.9" r="1.2" fill="#22361e"/><circle cx="74.2" cy="238.5" r="1.7" fill="#1b2d1d"/><circle cx="68.6" cy="215.0" r="1.0" fill="#778c50"/><circle cx="72.5" cy="164.9" r="2.5" fill="#778c50"/><circle cx="91.8" cy="178.7" r="2.1" fill="#3f582c"/><circle cx="56.5" cy="190.8" r="1.8" fill="#4a6432"/><circle cx="85.8" cy="160.3" r="2.4" fill="#3f582c"/><circle cx="62.1" cy="218.9" r="1.6" fill="#637c43"/><circle cx="32.0" cy="203.2" r="2.1" fill="#14221a"/><circle cx="16.5" cy="174.1" r="0.8" fill="#14221a"/><circle cx="99.8" cy="195.2" r="1.6" fill="#3f582c"/><circle cx="95.0" cy="191.3" r="1.5" fill="#778c50"/><circle cx="87.2" cy="223.8" r="1.5" fill="#3f582c"/><circle cx="11.9" cy="233.2" r="1.3" fill="#2a3e22"/><circle cx="94.0" cy="163.9" r="0.8" fill="#2a3e22"/><circle cx="76.1" cy="194.9" r="2.1" fill="#3f582c"/><circle cx="91.2" cy="155.4" r="2.3" fill="#778c50"/><circle cx="101.1" cy="181.3" r="0.9" fill="#22361e"/><circle cx="68.3" cy="233.3" r="2.4" fill="#22361e"/><circle cx="90.1" cy="175.2" r="2.2" fill="#778c50"/><circle cx="58.9" cy="229.2" r="0.9" fill="#14221a"/><circle cx="91.7" cy="192.5" r="1.6" fill="#4a6432"/><circle cx="2.5" cy="147.3" r="1.5" fill="#2a3e22"/><circle cx="14.7" cy="205.5" r="1.1" fill="#2a3e22"/><circle cx="93.4" cy="162.5" r="1.6" fill="#2a3e22"/><circle cx="91.4" cy="150.7" r="2.3" fill="#14221a"/><circle cx="20.3" cy="221.8" r="1.4" fill="#1b2d1d"/><circle cx="66.1" cy="206.2" r="1.8" fill="#1b2d1d"/><circle cx="19.9" cy="226.6" r="0.8" fill="#4a6432"/><circle cx="100.0" cy="158.7" r="1.5" fill="#22361e"/><circle cx="72.4" cy="233.0" r="1.5" fill="#637c43"/><circle cx="71.9" cy="158.1" r="2.1" fill="#22361e"/><circle cx="82.2" cy="169.7" r="2.0" fill="#1b2d1d"/><circle cx="101.6" cy="228.3" r="1.0" fill="#637c43"/><circle cx="102.2" cy="177.3" r="1.7" fill="#14221a"/><circle cx="0.7" cy="193.7" r="1.7" fill="#14221a"/><circle cx="17.1" cy="238.7" r="1.1" fill="#3f582c"/><circle cx="3.0" cy="216.5" r="1.0" fill="#2a3e22"/><circle cx="95.3" cy="193.5" r="0.7" fill="#14221a"/><circle cx="18.7" cy="190.3" r="1.9" fill="#2a3e22"/><circle cx="81.4" cy="185.9" r="1.7" fill="#1b2d1d"/><circle cx="61.8" cy="214.4" r="0.9" fill="#778c50"/><circle cx="74.5" cy="208.8" r="1.2" fill="#2a3e22"/><circle cx="46.6" cy="226.6" r="1.3" fill="#2a3e22"/><circle cx="83.8" cy="184.4" r="2.1" fill="#14221a"/><circle cx="7.5" cy="229.6" r="1.8" fill="#1b2d1d"/><circle cx="85.2" cy="210.7" r="2.2" fill="#2a3e22"/><circle cx="9.2" cy="219.9" r="1.0" fill="#1b2d1d"/><circle cx="51.7" cy="201.8" r="1.8" fill="#4a6432"/><circle cx="22.5" cy="236.7" r="0.8" fill="#1b2d1d"/><circle cx="15.0" cy="179.0" r="2.1" fill="#637c43"/><circle cx="9.5" cy="190.3" r="1.6" fill="#14221a"/><circle cx="70.7" cy="208.3" r="2.6" fill="#22361e"/><circle cx="26.3" cy="189.8" r="1.2" fill="#1b2d1d"/><circle cx="102.0" cy="196.4" r="0.8" fill="#55703a"/><circle cx="76.7" cy="191.5" r="2.4" fill="#1b2d1d"/><circle cx="87.7" cy="170.7" r="2.2" fill="#4a6432"/><circle cx="25.6" cy="216.8" r="2.2" fill="#2a3e22"/><circle cx="22.3" cy="180.4" r="1.3" fill="#1b2d1d"/><circle cx="89.7" cy="150.9" r="1.4" fill="#4a6432"/><circle cx="1.9" cy="148.4" r="1.2" fill="#1b2d1d"/><circle cx="16.0" cy="232.9" r="1.4" fill="#14221a"/><circle cx="2.1" cy="164.1" r="1.4" fill="#778c50"/><circle cx="33.8" cy="214.3" r="1.7" fill="#778c50"/><circle cx="19.5" cy="185.6" r="0.9" fill="#778c50"/><circle cx="14.1" cy="207.1" r="1.2" fill="#2a3e22"/><circle cx="29.2" cy="207.8" r="1.5" fill="#22361e"/><circle cx="23.5" cy="160.7" r="1.4" fill="#55703a"/><circle cx="88.2" cy="211.7" r="1.6" fill="#4a6432"/><circle cx="88.7" cy="190.5" r="1.4" fill="#4a6432"/><circle cx="24.4" cy="198.8" r="0.9" fill="#2a3e22"/><circle cx="96.8" cy="159.9" r="2.0" fill="#778c50"/><circle cx="21.0" cy="214.0" r="1.4" fill="#14221a"/><circle cx="77.2" cy="229.6" r="2.2" fill="#4a6432"/><circle cx="72.9" cy="190.0" r="2.0" fill="#778c50"/><circle cx="12.5" cy="229.9" r="2.4" fill="#2a3e22"/><circle cx="36.1" cy="227.9" r="1.8" fill="#1b2d1d"/><circle cx="35.5" cy="228.5" r="0.8" fill="#1b2d1d"/><circle cx="80.2" cy="198.3" r="1.9" fill="#778c50"/><circle cx="100.5" cy="171.1" r="2.2" fill="#22361e"/><circle cx="0.1" cy="188.9" r="1.4" fill="#778c50"/><circle cx="88.3" cy="213.7" r="0.9" fill="#22361e"/><circle cx="2.0" cy="218.2" r="1.1" fill="#1b2d1d"/><circle cx="100.2" cy="220.3" r="1.0" fill="#2a3e22"/><circle cx="83.7" cy="160.9" r="1.5" fill="#3f582c"/><circle cx="51.8" cy="200.4" r="1.4" fill="#1b2d1d"/><circle cx="91.3" cy="238.8" r="2.3" fill="#22361e"/><circle cx="11.7" cy="178.6" r="2.2" fill="#1b2d1d"/><circle cx="41.3" cy="210.8" r="2.0" fill="#4a6432"/><circle cx="19.1" cy="223.9" r="1.1" fill="#1b2d1d"/><circle cx="73.5" cy="197.8" r="2.3" fill="#1b2d1d"/><circle cx="20.9" cy="197.6" r="1.3" fill="#14221a"/><circle cx="49.1" cy="205.7" r="2.2" fill="#22361e"/><circle cx="71.5" cy="175.0" r="1.9" fill="#637c43"/><circle cx="5.1" cy="207.9" r="0.9" fill="#4a6432"/><circle cx="83.4" cy="173.3" r="2.4" fill="#2a3e22"/><circle cx="45.6" cy="225.4" r="1.9" fill="#3f582c"/><circle cx="59.9" cy="203.6" r="1.1" fill="#637c43"/><circle cx="46.0" cy="221.4" r="1.8" fill="#2a3e22"/><circle cx="92.0" cy="158.3" r="1.8" fill="#778c50"/><circle cx="6.7" cy="228.0" r="1.3" fill="#637c43"/><circle cx="82.1" cy="239.1" r="1.5" fill="#4a6432"/><circle cx="83.9" cy="172.3" r="0.8" fill="#22361e"/><circle cx="28.8" cy="233.2" r="2.3" fill="#2a3e22"/><circle cx="59.4" cy="233.4" r="0.8" fill="#1b2d1d"/><circle cx="56.1" cy="203.6" r="1.2" fill="#3f582c"/><circle cx="1.1" cy="151.5" r="2.5" fill="#3f582c"/><circle cx="96.2" cy="183.4" r="1.3" fill="#14221a"/><circle cx="97.4" cy="182.0" r="2.3" fill="#3f582c"/><circle cx="2.4" cy="192.6" r="1.1" fill="#22361e"/><circle cx="103.2" cy="198.2" r="1.6" fill="#55703a"/><circle cx="94.1" cy="164.0" r="0.9" fill="#637c43"/><circle cx="22.0" cy="211.2" r="1.7" fill="#1b2d1d"/><circle cx="2.3" cy="172.8" r="0.8" fill="#3f582c"/><circle cx="87.3" cy="213.3" r="0.7" fill="#55703a"/><circle cx="102.7" cy="176.2" r="2.5" fill="#778c50"/><circle cx="81.2" cy="227.4" r="2.2" fill="#778c50"/><circle cx="98.6" cy="164.1" r="1.0" fill="#55703a"/><circle cx="15.4" cy="199.1" r="1.4" fill="#1b2d1d"/><circle cx="44.1" cy="236.6" r="2.5" fill="#778c50"/><circle cx="87.0" cy="184.2" r="1.4" fill="#14221a"/><circle cx="61.7" cy="194.6" r="2.5" fill="#778c50"/><circle cx="5.5" cy="236.4" r="2.1" fill="#14221a"/><circle cx="24.3" cy="222.1" r="1.9" fill="#14221a"/><circle cx="83.0" cy="185.3" r="2.6" fill="#55703a"/><circle cx="74.0" cy="156.1" r="2.2" fill="#3f582c"/><circle cx="1.5" cy="175.8" r="1.6" fill="#1b2d1d"/><circle cx="7.6" cy="190.2" r="2.2" fill="#1b2d1d"/><circle cx="7.5" cy="183.6" r="0.8" fill="#14221a"/><circle cx="3.8" cy="166.7" r="2.3" fill="#14221a"/><circle cx="3.2" cy="204.4" r="1.6" fill="#14221a"/><circle cx="65.4" cy="226.2" r="2.1" fill="#778c50"/><circle cx="39.3" cy="219.5" r="2.0" fill="#22361e"/><circle cx="21.8" cy="213.8" r="1.0" fill="#14221a"/><circle cx="97.9" cy="196.3" r="1.4" fill="#55703a"/><circle cx="71.9" cy="210.5" r="1.4" fill="#778c50"/><circle cx="27.6" cy="170.0" r="1.9" fill="#1b2d1d"/><circle cx="52.7" cy="233.5" r="1.4" fill="#1b2d1d"/><circle cx="12.8" cy="226.2" r="2.5" fill="#778c50"/><circle cx="23.5" cy="181.5" r="1.1" fill="#1b2d1d"/><circle cx="45.9" cy="234.9" r="1.3" fill="#1b2d1d"/><circle cx="1.6" cy="170.0" r="1.8" fill="#2a3e22"/><circle cx="85.3" cy="223.2" r="1.8" fill="#14221a"/><circle cx="3.1" cy="194.1" r="2.0" fill="#14221a"/><circle cx="7.5" cy="147.1" r="1.7" fill="#14221a"/><circle cx="100.9" cy="237.4" r="2.6" fill="#637c43"/><circle cx="67.6" cy="206.5" r="2.6" fill="#778c50"/><circle cx="68.2" cy="216.5" r="2.5" fill="#1b2d1d"/><circle cx="51.7" cy="221.0" r="1.7" fill="#55703a"/><circle cx="0.4" cy="235.3" r="2.0" fill="#22361e"/><circle cx="69.0" cy="236.6" r="1.6" fill="#2a3e22"/><circle cx="89.4" cy="233.8" r="2.4" fill="#4a6432"/><circle cx="101.3" cy="214.9" r="0.9" fill="#14221a"/><circle cx="7.0" cy="154.6" r="2.0" fill="#22361e"/><circle cx="30.6" cy="215.1" r="1.2" fill="#14221a"/><circle cx="102.9" cy="194.0" r="1.0" fill="#637c43"/><circle cx="100.9" cy="186.8" r="1.5" fill="#14221a"/><circle cx="16.0" cy="219.7" r="2.1" fill="#1b2d1d"/><circle cx="30.6" cy="197.3" r="1.5" fill="#14221a"/><circle cx="22.3" cy="188.1" r="1.9" fill="#2a3e22"/><circle cx="21.2" cy="239.2" r="1.8" fill="#3f582c"/><circle cx="8.8" cy="216.7" r="1.4" fill="#22361e"/><circle cx="10.3" cy="169.7" r="1.3" fill="#1b2d1d"/><circle cx="76.2" cy="169.8" r="1.8" fill="#3f582c"/><circle cx="100.2" cy="205.7" r="2.3" fill="#3f582c"/><circle cx="5.8" cy="148.6" r="0.9" fill="#22361e"/><circle cx="82.7" cy="175.7" r="2.3" fill="#4a6432"/><circle cx="104.0" cy="182.9" r="1.5" fill="#637c43"/><circle cx="96.4" cy="199.5" r="0.7" fill="#1b2d1d"/><circle cx="76.6" cy="174.9" r="2.0" fill="#14221a"/><circle cx="78.7" cy="203.8" r="2.2" fill="#55703a"/><circle cx="86.9" cy="235.1" r="1.4" fill="#14221a"/><circle cx="73.1" cy="172.5" r="2.0" fill="#14221a"/><circle cx="95.9" cy="151.6" r="1.5" fill="#14221a"/><circle cx="16.1" cy="158.7" r="1.5" fill="#2a3e22"/><circle cx="20.8" cy="206.7" r="1.6" fill="#2a3e22"/><circle cx="57.2" cy="223.8" r="2.2" fill="#55703a"/><circle cx="59.7" cy="222.3" r="1.4" fill="#2a3e22"/><circle cx="73.2" cy="172.4" r="0.9" fill="#4a6432"/><circle cx="4.7" cy="231.2" r="2.2" fill="#1b2d1d"/><circle cx="74.5" cy="176.5" r="1.9" fill="#2a3e22"/><circle cx="94.6" cy="179.0" r="1.6" fill="#3f582c"/><circle cx="10.6" cy="162.3" r="2.3" fill="#4a6432"/><circle cx="59.1" cy="189.8" r="1.3" fill="#4a6432"/><circle cx="81.5" cy="152.5" r="1.1" fill="#22361e"/><circle cx="12.6" cy="213.7" r="1.8" fill="#22361e"/><circle cx="71.7" cy="168.8" r="2.5" fill="#22361e"/><circle cx="63.3" cy="221.0" r="2.6" fill="#4a6432"/><circle cx="2.1" cy="188.2" r="1.2" fill="#22361e"/><circle cx="82.5" cy="233.7" r="1.0" fill="#3f582c"/><circle cx="88.9" cy="196.3" r="1.7" fill="#22361e"/><circle cx="81.1" cy="201.0" r="1.7" fill="#4a6432"/><circle cx="75.6" cy="227.2" r="0.8" fill="#14221a"/><circle cx="97.1" cy="235.6" r="1.1" fill="#4a6432"/><circle cx="3.1" cy="191.9" r="2.6" fill="#14221a"/><circle cx="9.0" cy="205.8" r="1.9" fill="#14221a"/><circle cx="8.2" cy="182.5" r="1.8" fill="#14221a"/><circle cx="14.0" cy="161.6" r="1.3" fill="#1b2d1d"/><circle cx="101.5" cy="234.4" r="2.5" fill="#14221a"/><circle cx="63.3" cy="217.1" r="2.6" fill="#22361e"/><circle cx="54.0" cy="235.5" r="0.8" fill="#4a6432"/><circle cx="3.3" cy="220.9" r="2.0" fill="#14221a"/><circle cx="0.1" cy="135.6" r="2.2" fill="#1b2d1d"/><circle cx="80.1" cy="157.4" r="1.8" fill="#22361e"/><circle cx="67.8" cy="232.3" r="1.5" fill="#637c43"/><circle cx="26.4" cy="181.6" r="2.2" fill="#1b2d1d"/><circle cx="70.5" cy="196.3" r="1.8" fill="#14221a"/><circle cx="75.5" cy="203.5" r="2.2" fill="#14221a"/><circle cx="71.2" cy="184.4" r="1.5" fill="#3f582c"/><circle cx="102.9" cy="169.5" r="1.4" fill="#2a3e22"/><circle cx="104.0" cy="174.9" r="2.0" fill="#637c43"/><circle cx="61.7" cy="211.0" r="1.6" fill="#14221a"/><circle cx="99.2" cy="175.6" r="1.0" fill="#637c43"/><circle cx="91.3" cy="235.6" r="2.5" fill="#637c43"/><circle cx="14.7" cy="208.0" r="2.5" fill="#637c43"/><circle cx="88.3" cy="227.2" r="2.0" fill="#55703a"/><circle cx="90.6" cy="238.1" r="2.1" fill="#14221a"/><circle cx="12.8" cy="187.0" r="1.7" fill="#22361e"/><circle cx="32.2" cy="213.2" r="2.5" fill="#1b2d1d"/><circle cx="100.4" cy="199.5" r="0.9" fill="#3f582c"/><circle cx="88.0" cy="180.1" r="1.1" fill="#14221a"/><circle cx="4.7" cy="172.9" r="2.3" fill="#14221a"/><circle cx="22.9" cy="217.5" r="1.6" fill="#2a3e22"/><circle cx="2.6" cy="166.3" r="1.0" fill="#22361e"/><circle cx="27.1" cy="197.3" r="1.4" fill="#22361e"/><circle cx="60.2" cy="196.6" r="1.5" fill="#22361e"/><circle cx="34.6" cy="230.3" r="1.1" fill="#1b2d1d"/><circle cx="95.6" cy="213.7" r="2.5" fill="#3f582c"/><circle cx="98.5" cy="159.8" r="0.9" fill="#22361e"/><circle cx="77.5" cy="217.7" r="1.9" fill="#2a3e22"/><circle cx="88.1" cy="191.7" r="0.8" fill="#778c50"/><circle cx="6.4" cy="144.0" r="0.8" fill="#14221a"/><circle cx="8.8" cy="217.6" r="1.1" fill="#14221a"/><circle cx="26.5" cy="229.1" r="1.7" fill="#14221a"/><circle cx="98.4" cy="182.9" r="1.6" fill="#3f582c"/><circle cx="52.3" cy="231.7" r="1.9" fill="#2a3e22"/><circle cx="83.6" cy="237.6" r="2.4" fill="#22361e"/><circle cx="84.2" cy="217.7" r="1.0" fill="#22361e"/><circle cx="84.1" cy="235.1" r="2.0" fill="#3f582c"/><circle cx="70.2" cy="172.8" r="2.5" fill="#1b2d1d"/><circle cx="11.4" cy="238.0" r="2.4" fill="#1b2d1d"/><circle cx="63.5" cy="214.8" r="1.2" fill="#1b2d1d"/><circle cx="77.9" cy="202.9" r="1.5" fill="#778c50"/><circle cx="81.7" cy="225.8" r="1.8" fill="#2a3e22"/><circle cx="23.4" cy="207.6" r="0.8" fill="#2a3e22"/><circle cx="82.7" cy="153.6" r="1.9" fill="#1b2d1d"/><circle cx="67.4" cy="204.9" r="2.5" fill="#55703a"/><circle cx="94.8" cy="160.5" r="2.5" fill="#2a3e22"/><circle cx="80.5" cy="165.3" r="1.2" fill="#2a3e22"/><circle cx="78.7" cy="186.9" r="1.2" fill="#22361e"/><circle cx="25.1" cy="164.7" r="0.8" fill="#4a6432"/><circle cx="30.7" cy="224.3" r="2.3" fill="#1b2d1d"/><circle cx="49.3" cy="235.4" r="0.9" fill="#778c50"/><circle cx="79.3" cy="190.2" r="1.9" fill="#22361e"/><circle cx="1.3" cy="137.8" r="1.0" fill="#1b2d1d"/><circle cx="19.1" cy="236.5" r="2.2" fill="#22361e"/><circle cx="27.9" cy="217.3" r="0.8" fill="#55703a"/><circle cx="49.4" cy="234.9" r="2.4" fill="#55703a"/><circle cx="0.2" cy="180.1" r="1.9" fill="#2a3e22"/><circle cx="51.8" cy="215.9" r="1.2" fill="#1b2d1d"/><circle cx="70.9" cy="197.0" r="0.8" fill="#1b2d1d"/><circle cx="25.5" cy="191.9" r="1.5" fill="#2a3e22"/><circle cx="76.0" cy="197.3" r="1.1" fill="#778c50"/><circle cx="102.6" cy="225.9" r="2.5" fill="#22361e"/><circle cx="90.0" cy="185.0" r="1.5" fill="#637c43"/><circle cx="26.8" cy="216.6" r="2.0" fill="#22361e"/><circle cx="2.4" cy="225.7" r="1.9" fill="#778c50"/><circle cx="65.1" cy="189.6" r="2.0" fill="#2a3e22"/><circle cx="62.8" cy="195.0" r="2.6" fill="#637c43"/><circle cx="80.1" cy="188.4" r="2.6" fill="#778c50"/><circle cx="1.7" cy="174.6" r="2.2" fill="#2a3e22"/><circle cx="23.0" cy="172.6" r="2.6" fill="#778c50"/><circle cx="6.2" cy="193.3" r="2.3" fill="#2a3e22"/><circle cx="6.9" cy="237.5" r="2.1" fill="#22361e"/><circle cx="73.3" cy="190.9" r="1.7" fill="#1b2d1d"/><circle cx="78.3" cy="193.5" r="2.2" fill="#14221a"/><circle cx="28.5" cy="191.5" r="1.7" fill="#1b2d1d"/><circle cx="95.9" cy="216.9" r="1.6" fill="#778c50"/><circle cx="5.0" cy="179.8" r="1.8" fill="#14221a"/><circle cx="99.2" cy="167.5" r="2.1" fill="#4a6432"/><circle cx="42.1" cy="216.3" r="1.9" fill="#1b2d1d"/><circle cx="94.7" cy="199.3" r="0.8" fill="#55703a"/><circle cx="50.9" cy="205.9" r="0.8" fill="#22361e"/><circle cx="22.0" cy="206.8" r="2.0" fill="#1b2d1d"/><circle cx="88.0" cy="206.5" r="0.8" fill="#22361e"/><circle cx="63.4" cy="238.5" r="1.1" fill="#3f582c"/><circle cx="33.2" cy="200.5" r="2.5" fill="#2a3e22"/><circle cx="61.6" cy="213.5" r="1.6" fill="#22361e"/><circle cx="22.5" cy="226.9" r="2.4" fill="#4a6432"/><circle cx="6.1" cy="183.2" r="2.0" fill="#14221a"/><circle cx="79.7" cy="204.2" r="2.5" fill="#4a6432"/><circle cx="4.6" cy="167.5" r="2.6" fill="#2a3e22"/><circle cx="2.2" cy="206.1" r="1.0" fill="#1b2d1d"/><circle cx="72.3" cy="164.1" r="1.6" fill="#3f582c"/><circle cx="2.1" cy="156.0" r="0.7" fill="#22361e"/><circle cx="32.3" cy="194.3" r="1.2" fill="#55703a"/><circle cx="32.4" cy="227.4" r="2.1" fill="#2a3e22"/><circle cx="72.0" cy="184.1" r="1.5" fill="#3f582c"/><circle cx="27.6" cy="177.7" r="1.8" fill="#1b2d1d"/><circle cx="4.1" cy="179.1" r="1.7" fill="#2a3e22"/><circle cx="71.9" cy="211.4" r="1.6" fill="#3f582c"/><circle cx="23.6" cy="193.0" r="1.9" fill="#1b2d1d"/><circle cx="7.7" cy="155.7" r="2.5" fill="#22361e"/><circle cx="4.0" cy="160.4" r="1.4" fill="#14221a"/><circle cx="1.4" cy="144.6" r="1.4" fill="#14221a"/><circle cx="46.6" cy="238.8" r="2.4" fill="#14221a"/><circle cx="48.3" cy="228.8" r="2.0" fill="#778c50"/><circle cx="67.8" cy="219.0" r="2.6" fill="#14221a"/><circle cx="1.3" cy="208.8" r="2.5" fill="#1b2d1d"/><circle cx="79.2" cy="165.4" r="2.5" fill="#14221a"/><circle cx="19.6" cy="217.2" r="1.1" fill="#4a6432"/><circle cx="3.6" cy="217.4" r="1.0" fill="#55703a"/><circle cx="77.0" cy="227.3" r="1.9" fill="#22361e"/><circle cx="93.7" cy="211.1" r="1.3" fill="#55703a"/><circle cx="85.7" cy="156.3" r="2.1" fill="#778c50"/><circle cx="26.2" cy="205.8" r="1.4" fill="#14221a"/><circle cx="101.9" cy="203.0" r="1.9" fill="#4a6432"/><circle cx="2.9" cy="238.1" r="1.4" fill="#1b2d1d"/><circle cx="98.1" cy="200.1" r="1.9" fill="#55703a"/><circle cx="52.0" cy="213.8" r="1.8" fill="#637c43"/><circle cx="56.4" cy="235.6" r="0.9" fill="#637c43"/><circle cx="87.8" cy="197.4" r="2.1" fill="#14221a"/><circle cx="28.8" cy="196.9" r="2.4" fill="#778c50"/><circle cx="15.1" cy="207.9" r="1.0" fill="#14221a"/><circle cx="18.7" cy="178.4" r="1.5" fill="#3f582c"/><circle cx="15.6" cy="191.6" r="1.7" fill="#2a3e22"/><circle cx="32.0" cy="238.6" r="0.8" fill="#14221a"/><circle cx="44.0" cy="216.3" r="2.3" fill="#4a6432"/><circle cx="39.9" cy="207.3" r="1.4" fill="#14221a"/><circle cx="25.4" cy="239.7" r="0.9" fill="#1b2d1d"/><circle cx="65.3" cy="224.9" r="1.3" fill="#3f582c"/><circle cx="101.9" cy="210.9" r="2.3" fill="#3f582c"/><circle cx="70.4" cy="192.6" r="2.4" fill="#22361e"/><circle cx="103.9" cy="222.0" r="1.9" fill="#1b2d1d"/><circle cx="27.0" cy="183.6" r="0.9" fill="#14221a"/><circle cx="21.7" cy="235.0" r="1.4" fill="#14221a"/><circle cx="27.3" cy="168.9" r="2.0" fill="#4a6432"/><circle cx="20.7" cy="190.4" r="1.3" fill="#55703a"/><circle cx="71.5" cy="198.3" r="1.9" fill="#3f582c"/><circle cx="50.1" cy="208.9" r="2.3" fill="#2a3e22"/><circle cx="27.9" cy="190.9" r="1.2" fill="#2a3e22"/><circle cx="56.0" cy="197.3" r="2.4" fill="#1b2d1d"/><circle cx="13.1" cy="195.1" r="2.0" fill="#1b2d1d"/><circle cx="70.0" cy="168.2" r="1.9" fill="#55703a"/><circle cx="14.5" cy="203.8" r="1.2" fill="#2a3e22"/><circle cx="89.0" cy="169.7" r="0.9" fill="#14221a"/><circle cx="61.0" cy="223.5" r="1.0" fill="#55703a"/><circle cx="62.8" cy="220.3" r="1.4" fill="#4a6432"/><circle cx="91.9" cy="190.1" r="1.8" fill="#22361e"/><circle cx="29.8" cy="214.7" r="1.9" fill="#14221a"/><circle cx="45.9" cy="223.4" r="1.6" fill="#1b2d1d"/><circle cx="13.7" cy="196.0" r="2.0" fill="#22361e"/><circle cx="7.7" cy="196.1" r="1.5" fill="#2a3e22"/><circle cx="96.7" cy="204.4" r="2.3" fill="#55703a"/><circle cx="4.8" cy="172.8" r="0.9" fill="#1b2d1d"/><circle cx="10.2" cy="153.8" r="1.0" fill="#22361e"/><circle cx="38.3" cy="227.5" r="1.1" fill="#637c43"/><circle cx="14.1" cy="227.7" r="2.1" fill="#637c43"/><circle cx="22.2" cy="177.9" r="1.8" fill="#55703a"/><circle cx="3.9" cy="201.0" r="1.6" fill="#1b2d1d"/><circle cx="86.2" cy="230.1" r="1.0" fill="#4a6432"/><circle cx="95.4" cy="151.3" r="1.9" fill="#637c43"/><circle cx="98.7" cy="197.2" r="1.3" fill="#14221a"/><circle cx="84.9" cy="154.7" r="2.3" fill="#22361e"/><circle cx="25.9" cy="189.8" r="1.3" fill="#4a6432"/><circle cx="79.0" cy="165.7" r="1.5" fill="#1b2d1d"/><circle cx="9.9" cy="147.0" r="2.3" fill="#2a3e22"/><circle cx="18.3" cy="237.2" r="1.9" fill="#3f582c"/><circle cx="62.2" cy="196.7" r="2.2" fill="#2a3e22"/><circle cx="88.1" cy="217.6" r="2.0" fill="#2a3e22"/><circle cx="94.8" cy="194.3" r="1.9" fill="#14221a"/><circle cx="55.6" cy="215.1" r="1.6" fill="#55703a"/><circle cx="21.0" cy="160.6" r="1.5" fill="#2a3e22"/><circle cx="3.1" cy="199.5" r="2.2" fill="#1b2d1d"/><circle cx="1.2" cy="175.0" r="0.9" fill="#14221a"/><circle cx="25.2" cy="180.3" r="1.6" fill="#2a3e22"/><circle cx="13.9" cy="197.7" r="2.1" fill="#14221a"/><circle cx="13.1" cy="218.5" r="0.9" fill="#14221a"/><circle cx="13.8" cy="163.0" r="0.9" fill="#2a3e22"/><circle cx="83.8" cy="211.4" r="2.4" fill="#2a3e22"/><circle cx="4.9" cy="146.0" r="2.5" fill="#2a3e22"/><circle cx="59.7" cy="198.4" r="1.9" fill="#4a6432"/><circle cx="27.8" cy="214.1" r="1.8" fill="#2a3e22"/><circle cx="34.2" cy="201.3" r="1.5" fill="#55703a"/><circle cx="55.4" cy="193.1" r="0.7" fill="#2a3e22"/><circle cx="68.7" cy="177.3" r="2.0" fill="#2a3e22"/><circle cx="97.5" cy="151.4" r="0.9" fill="#637c43"/><circle cx="0.5" cy="222.4" r="2.4" fill="#4a6432"/><circle cx="67.4" cy="208.6" r="2.2" fill="#778c50"/><circle cx="2.8" cy="215.0" r="2.2" fill="#22361e"/><circle cx="101.1" cy="206.1" r="1.0" fill="#22361e"/><circle cx="96.6" cy="189.6" r="2.4" fill="#1b2d1d"/><circle cx="61.4" cy="222.0" r="1.4" fill="#55703a"/><circle cx="85.0" cy="233.6" r="1.1" fill="#778c50"/><circle cx="80.0" cy="210.5" r="1.3" fill="#4a6432"/><circle cx="100.7" cy="232.6" r="0.8" fill="#4a6432"/><circle cx="99.8" cy="233.1" r="1.0" fill="#1b2d1d"/><circle cx="96.7" cy="153.0" r="1.6" fill="#14221a"/><circle cx="87.3" cy="204.2" r="1.1" fill="#14221a"/><circle cx="5.3" cy="160.0" r="1.3" fill="#14221a"/><circle cx="61.9" cy="219.8" r="0.8" fill="#3f582c"/><circle cx="70.1" cy="165.6" r="1.6" fill="#4a6432"/><circle cx="24.7" cy="218.0" r="1.8" fill="#14221a"/><circle cx="10.6" cy="216.0" r="1.8" fill="#22361e"/><circle cx="40.6" cy="236.5" r="2.0" fill="#1b2d1d"/><circle cx="70.1" cy="179.7" r="1.7" fill="#14221a"/><circle cx="86.6" cy="220.6" r="1.7" fill="#14221a"/><circle cx="0.8" cy="193.1" r="2.4" fill="#2a3e22"/><circle cx="11.7" cy="199.0" r="2.3" fill="#22361e"/><circle cx="23.4" cy="210.1" r="2.4" fill="#22361e"/><circle cx="99.9" cy="173.8" r="1.6" fill="#14221a"/><circle cx="3.5" cy="181.7" r="1.3" fill="#778c50"/><circle cx="62.0" cy="233.3" r="2.5" fill="#1b2d1d"/><circle cx="95.0" cy="182.0" r="2.0" fill="#22361e"/><circle cx="9.4" cy="151.5" r="2.1" fill="#14221a"/><circle cx="90.9" cy="189.4" r="1.5" fill="#3f582c"/><circle cx="49.2" cy="211.6" r="2.2" fill="#22361e"/><circle cx="99.4" cy="195.5" r="2.0" fill="#1b2d1d"/><circle cx="15.3" cy="236.7" r="1.1" fill="#55703a"/><circle cx="98.8" cy="231.6" r="2.3" fill="#22361e"/><circle cx="76.1" cy="221.6" r="2.3" fill="#55703a"/><circle cx="53.2" cy="212.2" r="0.8" fill="#2a3e22"/><circle cx="88.9" cy="150.3" r="1.3" fill="#55703a"/><circle cx="93.6" cy="209.0" r="2.2" fill="#637c43"/><circle cx="15.6" cy="177.5" r="2.3" fill="#1b2d1d"/><circle cx="0.4" cy="172.6" r="1.2" fill="#637c43"/><circle cx="100.7" cy="219.9" r="1.8" fill="#55703a"/><circle cx="69.7" cy="207.1" r="1.0" fill="#637c43"/><circle cx="7.4" cy="202.4" r="0.8" fill="#14221a"/><circle cx="69.5" cy="195.9" r="2.2" fill="#2a3e22"/><circle cx="63.9" cy="199.5" r="2.3" fill="#22361e"/><circle cx="6.5" cy="200.2" r="1.3" fill="#2a3e22"/><circle cx="61.7" cy="223.5" r="2.2" fill="#2a3e22"/><circle cx="93.6" cy="199.0" r="2.0" fill="#22361e"/><circle cx="6.3" cy="191.8" r="1.3" fill="#55703a"/><circle cx="59.9" cy="211.4" r="2.1" fill="#3f582c"/><circle cx="44.0" cy="217.8" r="1.3" fill="#1b2d1d"/></g><g filter="url(#pb2)"><path d="M80.6 135.8L83 152L87.7 180.8M83 152L78 146M84.6 162L89 154M34.6 171.4L44 182L54.6 194.8M44 182L42 172M48 187L56 184" stroke="#c9ccc2" stroke-width="1" fill="none" opacity="0.9"/></g></g></svg>
<svg style="left:634.2px;top:263.2px;" width="4.4" height="4.4" viewBox="0 0 4.4 4.4"><path d="M0.2 4.2V2.4L1.9 1.3V4.2z" fill="#ff5a6e"/><path d="M2.3 4.2V1.7L4.2 0.2V4.2z" fill="#196cff"/></svg>
<span class="t" style="left:640.00px;top:262.83px;font-size:5.4px;color:#1c2033;font-weight:700;transform:scaleX(1.0568);">Mentimeter</span>
<div class="b" style="left:660.4px;top:443.8px;width:6.4px;height:6.4px;background:#3f83ea;border-radius:50%;"></div>
<div class="b" style="left:662.8px;top:445.6px;width:1.6px;height:2.4px;background:#dfeafc;border-radius:40%;"></div>
<span class="t" style="left:395.20px;top:436.95px;font-size:3.6px;color:#8b8b8b;transform:scaleX(1.1315);">Press B to show image</span>
<div class="b" style="left:391.6px;top:450.2px;width:153px;height:15.4px;background:#ffffff;border:0.6px solid #dadce0;border-radius:1.5px;box-shadow:0 0.5px 1.5px rgba(0,0,0,.18);"></div>
<div class="b" style="left:396px;top:456.2px;width:1px;height:3.2px;background:#c7c9cc;"></div>
<span class="t" style="left:402.40px;top:455.90px;font-size:3.9px;color:#55585c;transform:scaleX(1.0622);">meet.google.com транслює вікно.</span>
<div class="b" style="left:470.7px;top:452.2px;width:50.4px;height:11.5px;background:#1a73e8;border-radius:1.4px;"></div>
<span class="t" style="left:477.60px;top:456.00px;font-size:3.9px;color:#ffffff;font-weight:700;transform:scaleX(0.9651);">Більше не ділитися</span>
<span class="t" style="left:525.40px;top:455.90px;font-size:3.9px;color:#3b7de0;transform:scaleX(1.0454);">Сховати</span>
<div class="b" style="left:223.2px;top:467.9px;width:64.4px;height:11.900000000000034px;background:#1b3537;"></div>
<div class="b" style="left:287.4px;top:467.9px;width:140.6px;height:11.900000000000034px;background:#ffffff;"></div>
<div class="b" style="left:290.2px;top:467.9px;width:0.6px;height:11.900000000000034px;background:#dddddd;"></div>
<div class="b" style="left:427.8px;top:467.09999999999997px;width:142px;height:12.700000000000035px;background:#4a232d;"></div>
<div class="b" style="left:569.4px;top:467.9px;width:143.39999999999998px;height:11.900000000000034px;background:#1f3833;"></div>
<div class="b" style="left:569.4px;top:467.9px;width:12px;height:11.900000000000034px;background:linear-gradient(90deg,#4a232d,#1f3833);"></div>
<svg style="left:229px;top:471.2px;" width="5.6" height="5.6" viewBox="0 0 5.6 5.6"><path d="M0 0.8L2.4 0.4V2.6H0zM2.9 0.3L5.6 0V2.6H2.9zM0 3.1H2.4V5.3L0 4.9zM2.9 3.1H5.6V5.7L2.9 5.3z" fill="#f1f3f4"/></svg>
<svg style="left:244.6px;top:471.4px;" width="5" height="5" viewBox="0 0 5 5"><circle cx="3" cy="2" r="1.6" fill="none" stroke="#dfe6e6" stroke-width="0.7"/><path d="M1.8 3.2L0.4 4.6" stroke="#dfe6e6" stroke-width="0.8"/></svg>
<svg style="left:262.4px;top:471.6px;" width="6" height="5" viewBox="0 0 6 5"><rect x="0.4" y="0.8" width="3.6" height="3.4" fill="none" stroke="#c9d3d3" stroke-width="0.6"/><path d="M4.8 0.8V4.2M0.4 0.2H4" stroke="#c9d3d3" stroke-width="0.5"/></svg>
<div class="b" style="left:282.2px;top:471px;width:5.2px;height:6.2px;background:#e9c34a;"></div>
<div class="b" style="left:282.2px;top:474.4px;width:5.2px;height:2.8px;background:#5d6f84;"></div>
<span class="t" style="left:312.00px;top:469.09px;font-size:8.4px;color:#262626;transform:scaleX(0.9063);">UK Українська (Україна)</span>
<span class="t" style="left:421.20px;top:469.35px;font-size:3.6px;color:#555;">O</span>
<span class="t" style="left:421.00px;top:475.35px;font-size:3.6px;color:#444;font-weight:700;">M</span>
<svg style="left:574.6px;top:469.6px;" width="8" height="8" viewBox="0 0 8 8"><path d="M0.6 4A3.4 3.2 0 0 1 7.4 4z" fill="#5aa0e0"/><path d="M4 4V7.2" stroke="#e86a5a" stroke-width="0.7"/></svg>
<span class="t" style="left:583.20px;top:471.97px;font-size:5px;color:#e6ecea;font-weight:700;transform:scaleX(0.9432);">Raining now</span>
<svg style="left:616.6px;top:472.6px;" width="4" height="2.4" viewBox="0 0 4 2.4"><path d="M0.3 2.1L2 0.4L3.7 2.1" stroke="#dfe6e4" stroke-width="0.6" fill="none"/></svg>
<svg style="left:624.2px;top:471.4px;" width="4" height="5" viewBox="0 0 4 5"><path d="M2.8 0.4A2.2 2.2 0 1 0 2.8 4.6M2.8 1V4" stroke="#dfe6e4" stroke-width="0.6" fill="none"/></svg>
<div class="b" style="left:631.6px;top:472.4px;width:5.4px;height:3.2px;background:#e6ecea;"></div>
<svg style="left:641.6px;top:471.8px;" width="4" height="4" viewBox="0 0 4 4"><path d="M0.4 3.8V2.8M1.6 3.8V1.8M2.8 3.8V0.8" stroke="#cfd8d6" stroke-width="0.7"/></svg>
<svg style="left:649px;top:471.8px;" width="5" height="4" viewBox="0 0 5 4"><path d="M0.3 1.4H1.4L2.6 0.4V3.6L1.4 2.6H0.3z" fill="#dfe6e4"/><path d="M3.4 1A1.6 1.6 0 0 1 3.4 3" stroke="#dfe6e4" stroke-width="0.5" fill="none"/></svg>
<span class="t" style="left:658.40px;top:472.44px;font-size:4.2px;color:#dfe6e4;transform:scaleX(1.0646);">УКР</span>
<span class="t" style="left:679.40px;top:469.90px;font-size:3.9px;color:#e6ecea;transform:scaleX(0.9688);">15:21</span>
<span class="t" style="left:673.40px;top:475.10px;font-size:3.9px;color:#cfd8d6;transform:scaleX(1.0100);">06.05.2022</span>
<svg style="left:699.4px;top:470.8px;" width="6.4" height="6.4" viewBox="0 0 6.4 6.4"><path d="M0.4 0.4H5.6V4.4H3L1.4 5.8V4.4H0.4z" fill="#e9efed"/><path d="M1.4 1.6H4.6M1.4 2.8H4" stroke="#6b7a78" stroke-width="0.5"/></svg>
<div class="b" style="left:172.4px;top:345.9px;width:591px;height:0;border-top:0.8px dotted rgba(150,150,150,.36);"></div>
<div class="b" style="left:468px;top:209px;width:0;height:270.8px;border-left:0.8px dotted rgba(150,150,150,.36);"></div>
<div class="b" style="left:466.6px;top:208.6px;width:3.2px;height:1px;background:#999;"></div>
<div class="b" style="left:220.79999999999998px;top:343.90000000000003px;width:4.8px;height:4.8px;background:#ffffff;border-radius:50%;border:0.6px solid #8a8a8a;"></div>
<div class="b" style="left:710.4px;top:343.90000000000003px;width:4.8px;height:4.8px;background:#ffffff;border-radius:50%;border:0.6px solid #8a8a8a;"></div>
<!-- tiles -->
<svg style="left:830.0px;top:128.6px;" width="181.5" height="102.4" viewBox="0 0 181.5 102.4"><defs><filter id="t1b" x="-10%" y="-10%" width="120%" height="120%"><feGaussianBlur stdDeviation="0.9"/></filter><filter id="t1c" x="-10%" y="-10%" width="120%" height="120%"><feGaussianBlur stdDeviation="0.8"/></filter><filter id="t1d" x="-30%" y="-30%" width="160%" height="160%"><feGaussianBlur stdDeviation="6"/></filter><clipPath id="t1cl"><rect x="0" y="0" width="181.5" height="102.4" rx="6"/></clipPath><linearGradient id="wall1" x1="0" y1="0" x2="1" y2="0"><stop offset="0" stop-color="#c29c88"/><stop offset="0.2" stop-color="#d3b09b"/><stop offset="0.7" stop-color="#dabca8"/><stop offset="1" stop-color="#d9bfae"/></linearGradient></defs><g clip-path="url(#t1cl)"><rect width="181.5" height="102.4" fill="url(#wall1)"/><ellipse cx="140" cy="80" rx="40" ry="30" fill="#e2c9b8" filter="url(#t1d)" opacity="0.8"/><rect x="0" y="0" width="6.6" height="103" fill="#3a2822"/><rect x="0" y="0" width="4.2" height="103" fill="#1d2321"/><g transform="translate(1.8 0)"><g filter="url(#t1c)"><rect x="38.6" y="-2" width="108.6" height="46.6" fill="#9a775c"/><rect x="40.6" y="-2" width="104.6" height="44" fill="#8fa5a3"/><path d="M41 8C55 2 62 14 74 10C84 6 92 -2 104 4C116 8 130 2 145 10V20C130 14 120 22 106 18C92 14 86 24 74 22C60 20 52 14 41 20z" fill="#c5cbc4"/><path d="M41 26C52 22 60 31 72 29C84 27 88 34 100 33C112 31 126 36 145 29V42H41z" fill="#b98268"/><path d="M52 28C58 25 66 28 72 35C64 40 56 39 52 34z" fill="#d98555"/><path d="M100 6C108 4 114 8 118 14C110 18 104 14 100 10z" fill="#d3c7b2"/><path d="M84 12C92 8 100 12 104 22C96 28 86 24 84 18z" fill="#5e8c91"/><path d="M118 18C126 15 136 20 141 28C132 31 122 29 118 23z" fill="#7ea2a2"/><path d="M44 4C52 1 62 5 68 14C60 17 50 14 44 9z" fill="#55808a"/><path d="M106 8C112 3 124 3 130 9" stroke="#dcd3c2" stroke-width="2.4" fill="none"/><path d="M112 31C120 37 130 37 139 32" stroke="#ddd2c0" stroke-width="1.8" fill="none"/><rect x="44" y="14" width="9" height="12" fill="#6d8f98"/><rect x="124" y="22" width="12" height="9" fill="#c9b9a6"/><rect x="128" y="24" width="6" height="6" fill="#8e6a58"/></g><g filter="url(#t1b)"><path d="M57 42C62 35 100 34 108 42L113 72H53z" fill="#7b8189"/><path d="M100 50C108 48 113 56 113 70H101z" fill="#5a443b"/><path d="M30 103C38 86 50 72 66 67H100C118 71 134 86 146 103z" fill="#ccd2d7"/><path d="M70 70L83 86L96 70L98 103H68z" fill="#b9bfc4"/><path d="M82 23.6C69 23.6 64 36 63.6 50C61 68 54 86 51 103H78L83 66L88 103H107C105 88 101 70 99.6 52C99 36 95 23.6 82 23.6z" fill="#2f1f1b"/><rect x="76.6" y="58" width="11" height="16" fill="#b98d7b"/><ellipse cx="82.2" cy="48" rx="10.8" ry="15.2" fill="#c9a08d"/><path d="M70 43C70 28 94 27 95 43C91 34 78 33 70 43z" fill="#2f1f1b"/><path d="M75.4 45.4H80M85 45.4H89.6" stroke="#4a2f28" stroke-width="1.3"/><path d="M79.4 56C81.4 57.2 83.6 57.2 85.6 56" stroke="#8a4e46" stroke-width="1" fill="none"/></g><path d="M73 52C75 66 81 74 85 82V100" stroke="#eeeeee" stroke-width="0.6" fill="none" opacity="0.8"/></g></g></svg>
<span class="t" style="left:843.40px;top:205.05px;font-size:11.4px;color:#ffffff;font-weight:700;transform:scaleX(0.9133);text-shadow:0 0 2px rgba(0,0,0,.5);">Ви</span>
<svg style="left:829.8px;top:241.3px;" width="181.6" height="102.6" viewBox="0 0 181.6 102.6"><defs><filter id="t2b" x="-10%" y="-10%" width="120%" height="120%"><feGaussianBlur stdDeviation="1.2"/></filter><clipPath id="t2cl"><rect x="0" y="0" width="181.6" height="102.6" rx="6.5"/></clipPath><linearGradient id="wall2" x1="0" y1="0" x2="1" y2="0"><stop offset="0" stop-color="#cfcfcb"/><stop offset="0.3" stop-color="#e0e0dc"/><stop offset="0.75" stop-color="#d9d9d5"/><stop offset="1" stop-color="#cfcfcb"/></linearGradient></defs><g clip-path="url(#t2cl)"><rect width="181.6" height="102.6" fill="url(#wall2)"/><path d="M37 0L31.6 102.6" stroke="#a9a9a4" stroke-width="0.9"/><rect x="87.6" y="0" width="0.9" height="60" fill="#b5b5b0"/><g filter="url(#t2b)"><rect x="141" y="0" width="20" height="102.4" fill="#b58fb4"/><rect x="160" y="0" width="14" height="102.4" fill="#7f8f45"/><rect x="172" y="0" width="10" height="102.4" fill="#5b6636"/><rect x="143" y="62" width="36" height="3" fill="#8e8e86"/><rect x="146" y="50" width="18" height="12" fill="#97a7b3"/><rect x="143" y="68" width="36" height="34" fill="#3c3b3e"/><rect x="148" y="84" width="20" height="10" fill="#8d8f96"/><rect x="168" y="20" width="8" height="40" fill="#3c3f2a"/><path d="M44 102.4C54 90 72 84 92 80H134C140 86 142 94 142 102.4z" fill="#1d1d28"/><path d="M114 4C92 4 80 20 80 40C80 56 84 70 94 76L106 60L130 84C142 72 146 56 144 38C142 18 132 4 114 4z" fill="#5b3826"/><path d="M100 70H128V88C120 92 108 92 100 88z" fill="#b98c74"/><path d="M90 40C90 24 100 16 114 16C128 16 138 26 138 42C138 62 128 84 114 84C100 84 90 62 90 40z" fill="#c69b82"/><path d="M88 38C90 20 104 10 120 14C132 16 140 26 140 38C134 26 124 22 112 24C102 26 94 30 88 38z" fill="#5b3826"/><path d="M97 46H107M121 46H131" stroke="#5a4038" stroke-width="1.6"/><path d="M108 70C112 72 118 72 122 70" stroke="#9a5a52" stroke-width="1.6" fill="none"/><path d="M113 50L111 60H117" stroke="#a97c66" stroke-width="1" fill="none"/></g></g><rect x="1.5" y="1.5" width="178.6" height="99.6" rx="6" fill="none" stroke="#74a3f2" stroke-width="3"/></svg>
<div class="b" style="left:985.4px;top:248.8px;width:19.6px;height:19.6px;background:#1a73e8;border-radius:50%;"></div>
<div class="b" style="left:990.2px;top:256.6px;width:2.2px;height:4.2px;background:#fff;border-radius:1.1px;"></div>
<div class="b" style="left:994.1px;top:253.2px;width:2.2px;height:10.8px;background:#fff;border-radius:1.1px;"></div>
<div class="b" style="left:998px;top:256.6px;width:2.2px;height:4.2px;background:#fff;border-radius:1.1px;"></div>
<span class="t" style="left:843.40px;top:319.06px;font-size:10.8px;color:#ffffff;font-weight:700;transform:scaleX(1.0651);text-shadow:0 0 2px rgba(0,0,0,.75),0 0 1px rgba(0,0,0,.6);">Галина Федоришин</span>
<div class="b" style="left:830.4px;top:352.8px;width:181.2px;height:103.2px;background:#3c4043;border-radius:7px;"></div>
<div class="b" style="left:887px;top:372.6px;width:36.6px;height:36.6px;background:#5d4037;border-radius:50%;"></div>
<div class="b" style="left:920.3px;top:372.6px;width:36.6px;height:36.6px;background:#ec407a;border-radius:50%;"></div>
<span class="t" style="left:899.83px;top:382.92px;font-size:16.4px;color:#ffffff;">Х</span>
<span class="t" style="left:933.40px;top:382.52px;font-size:16.4px;color:#ffffff;">У</span>
<span class="t" style="left:894.40px;top:424.10px;font-size:12.4px;color:#e8eaed;font-weight:700;transform:scaleX(0.9016);">Ще 8 осіб</span>
<!-- meet_bottom -->
<div class="clip" style="left:0;top:509.4px;width:1024px;height:34.5px;">
<span class="t" style="left:21.20px;top:26.89px;font-size:13.6px;color:#ffffff;font-weight:700;transform:scaleX(0.8913);">15:23</span>
<div class="b" style="left:62.2px;top:26.700000000000045px;width:1.1px;height:14px;background:#bdc1c6;"></div>
<span class="t" style="left:74.00px;top:26.89px;font-size:13.6px;color:#ffffff;font-weight:700;transform:scaleX(0.9543);">Психологічна підтримка вчителів</span>
<div class="b" style="left:377.8px;top:17.199999999999978px;width:34.4px;height:34.4px;background:#3c4043;border-radius:50%;"></div>
<div class="b" style="left:421.1px;top:17.199999999999978px;width:34.4px;height:34.4px;background:#3c4043;border-radius:50%;"></div>
<div class="b" style="left:464.7px;top:17.199999999999978px;width:34.4px;height:34.4px;background:#3c4043;border-radius:50%;"></div>
<div class="b" style="left:508.00000000000006px;top:17.199999999999978px;width:34.4px;height:34.4px;background:#3c4043;border-radius:50%;"></div>
<div class="b" style="left:551.5px;top:17.199999999999978px;width:34.4px;height:34.4px;background:#3c4043;border-radius:50%;"></div>
<div class="b" style="left:595.2px;top:17.199999999999978px;width:47.4px;height:34.4px;background:#ea4335;border-radius:17.2px;"></div>
<svg style="left:389.6px;top:26.600000000000023px;" width="11" height="12" viewBox="0 0 11 12"><rect x="3.8" y="0" width="3.6" height="8.6" rx="1.8" fill="#fff"/><path d="M1.1 6.2A4.5 4.5 0 0 0 10.1 6.2" fill="none" stroke="#fff" stroke-width="1.4"/></svg>
<svg style="left:430.6px;top:27.600000000000023px;" width="16" height="12" viewBox="0 0 16 12"><rect x="1.5" y="1.6" width="10.4" height="10" rx="0.8" fill="none" stroke="#fff" stroke-width="1.6"/><path d="M12.2 6.6L15.2 3.8V11" stroke="#fff" stroke-width="1.4" fill="none"/></svg>
<svg style="left:474.4px;top:25.200000000000045px;" width="15" height="12" viewBox="0 0 15 12"><path d="M3.4 12V4.4a0.9 0.9 0 0 1 1.8 0V8.6V2.2a0.9 0.9 0 0 1 1.8 0V8.2V1.4a0.9 0.9 0 0 1 1.8 0V8.2V2.6a0.9 0.9 0 0 1 1.8 0V12M10.6 9.2L12.4 6.6a0.9 0.9 0 0 1 1.5 0.9L12.6 12M3.4 9L1.6 8.2" fill="none" stroke="#fff" stroke-width="1.1" stroke-linejoin="round"/></svg>
<svg style="left:516.6px;top:27.0px;" width="17" height="10" viewBox="0 0 17 10"><rect x="0.9" y="0.9" width="15.2" height="11" rx="1" fill="none" stroke="#fff" stroke-width="1.7"/><path d="M8.5 4.6L11.6 8H5.4z" fill="#fff"/></svg>
<div class="b" style="left:567.5px;top:28.0px;width:2.5px;height:2.5px;background:#fff;border-radius:50%;"></div>
<div class="b" style="left:567.5px;top:33.200000000000045px;width:2.5px;height:2.5px;background:#fff;border-radius:50%;"></div>
<svg style="left:609.4px;top:29.399999999999977px;" width="19" height="8" viewBox="0 0 19 8"><path d="M0.6 8C0.6 3.4 4.6 0.8 9.5 0.8C14.4 0.8 18.4 3.4 18.4 8z" fill="#fff"/><rect x="8.2" y="3" width="2.6" height="5" fill="#ea4335"/></svg>
<svg style="left:819.8px;top:24.5px;" width="20" height="12" viewBox="0 0 20 12"><circle cx="10" cy="9.6" r="8.4" fill="none" stroke="#fff" stroke-width="1.6"/><rect x="9.2" y="6" width="1.7" height="1.8" fill="#fff"/><rect x="9.2" y="8.8" width="1.7" height="3" fill="#fff"/></svg>
<svg style="left:862.8px;top:25.399999999999977px;" width="14" height="9" viewBox="0 0 14 9"><circle cx="4.2" cy="4.4" r="2.8" fill="none" stroke="#fff" stroke-width="1.6"/><path d="M9 1.2A3.3 3.3 0 0 1 9 7.6" fill="#fff" stroke="#fff" stroke-width="0.8"/></svg>
<div class="b" style="left:870.7px;top:8.800000000000068px;width:16.4px;height:16.4px;background:#5f6368;border-radius:50%;"></div>
<span class="t" style="left:874.03px;top:12.64px;font-size:9.4px;color:#ffffff;">11</span>
<svg style="left:901.2px;top:24.399999999999977px;" width="17" height="11" viewBox="0 0 17 11"><rect x="0.9" y="0.9" width="15.2" height="12" rx="1" fill="none" stroke="#fff" stroke-width="1.7"/><path d="M3.6 4.6H13.4M3.6 7.2H13.4M3.6 9.8H10" stroke="#fff" stroke-width="1.3"/></svg>
<svg style="left:943.8px;top:24.800000000000068px;" width="12" height="10" viewBox="0 0 12 10"><path d="M6 1.2L10.8 8.6H1.2z" fill="none" stroke="#fff" stroke-width="1.7"/><circle cx="6" cy="6.4" r="0.9" fill="#fff"/></svg>
<svg style="left:981.6px;top:24.0px;" width="17" height="11" viewBox="0 0 17 11"><path d="M1 10.6V5.4L8.5 1L16 5.4V10.6" fill="none" stroke="#fff" stroke-width="1.7"/><rect x="5.6" y="7.4" width="5.8" height="4" fill="#fff"/><path d="M6.8 7.4V6.4a1.7 1.7 0 0 1 3.4 0V7.4" stroke="#fff" stroke-width="0.9" fill="none"/></svg>
</div>
<!-- taskbar -->
<div class="b" style="left:-12px;top:543.8px;width:1048px;height:44.2px;background:#1f1f21;"></div>
<svg style="left:15.6px;top:553.2px;" width="13.2" height="13.2" viewBox="0 0 13.2 13.2"><defs><radialGradient id="sun" cx="0.4" cy="0.35" r="0.7"><stop offset="0" stop-color="#ffd75a"/><stop offset="0.6" stop-color="#f9b21c"/><stop offset="1" stop-color="#e98a12"/></radialGradient></defs><circle cx="6.6" cy="6.6" r="6.3" fill="url(#sun)"/></svg>
<span class="t" style="left:34.90px;top:551.13px;font-size:8px;color:#e6e6e6;transform:scaleX(0.8720);">17°C</span>
<span class="t" style="left:34.90px;top:561.73px;font-size:8px;color:#d6d6d6;transform:scaleX(0.9734);">Sunny</span>
<svg style="left:328.6px;top:552.2px;" width="16.4" height="16.4" viewBox="0 0 16.4 16.4"><defs><linearGradient id="w11" x1="0" y1="0" x2="1" y2="1"><stop offset="0" stop-color="#6fd3f7"/><stop offset="1" stop-color="#1f8fd6"/></linearGradient></defs><g fill="url(#w11)"><rect x="0" y="0" width="7.7" height="7.7" rx="0.6"/><rect x="8.7" y="0" width="7.7" height="7.7" rx="0.6"/><rect x="0" y="8.7" width="7.7" height="7.7" rx="0.6"/><rect x="8.7" y="8.7" width="7.7" height="7.7" rx="0.6"/></g></svg>
<svg style="left:358.4px;top:552.6px;" width="16" height="16" viewBox="0 0 16 16"><circle cx="9.4" cy="6.4" r="5" fill="#3b3b3d" stroke="#f2f2f2" stroke-width="1.8"/><path d="M5.8 10.2L1.4 14.6" stroke="#f2f2f2" stroke-width="2.2" stroke-linecap="round"/></svg>
<svg style="left:387.6px;top:552.8000000000001px;" width="17" height="15" viewBox="0 0 17 15"><rect x="0.4" y="4.4" width="10.6" height="10" rx="1" fill="#8f9194"/><rect x="5.6" y="0.4" width="11" height="10.4" rx="1" fill="#f3f3f3"/></svg>
<svg style="left:416.4px;top:552.6px;" width="16" height="16" viewBox="0 0 16 16"><path d="M8 0.6A7 7 0 0 1 8 14.6C6.8 14.6 5.6 14.3 4.6 13.8L1 15.2L2.2 11.8A7 7 0 0 1 8 0.6z" fill="#7b6fd6"/><rect x="4" y="5" width="5.6" height="5" rx="1" fill="#fff"/><path d="M9.8 6.8L12.2 5.2V9.8L9.8 8.2z" fill="#fff"/></svg>
<svg style="left:445.6px;top:552.6px;" width="17" height="16" viewBox="0 0 17 16"><rect x="4" y="0.6" width="12.4" height="14.8" rx="1" fill="#2b7cd3"/><rect x="4" y="0.6" width="12.4" height="3.8" fill="#41a5ee"/><rect x="4" y="11.6" width="12.4" height="3.8" fill="#103f91"/><rect x="0.4" y="3.6" width="9" height="9" rx="0.8" fill="#185abd"/><text x="4.9" y="10.6" font-size="6.6" font-weight="700" text-anchor="middle" fill="#fff" font-family="Liberation Sans, sans-serif">W</text></svg>
<div class="b" style="left:452.4px;top:572px;width:4px;height:1.6px;background:#9a9a9a;border-radius:1px;"></div>
<svg style="left:475.2px;top:552.4000000000001px;" width="16" height="16" viewBox="0 0 16 16"><defs><linearGradient id="msg" x1="0" y1="1" x2="0" y2="0"><stop offset="0" stop-color="#0a7cff"/><stop offset="1" stop-color="#2ba0ff"/></linearGradient></defs><path d="M8 0.6C3.8 0.6 0.6 3.6 0.6 7.6C0.6 9.8 1.6 11.6 3 12.8V15.4L5.4 14.1C6.2 14.4 7.1 14.5 8 14.5C12.2 14.5 15.4 11.5 15.4 7.6C15.4 3.6 12.2 0.6 8 0.6z" fill="url(#msg)"/><path d="M3.4 9.6L6.6 5.8L8.6 7.6L12.6 5.8L9.4 9.6L7.4 7.8z" fill="#fff"/></svg>
<svg style="left:505px;top:552.4000000000001px;" width="16" height="16" viewBox="0 0 16 16"><rect x="0" y="0" width="16" height="16" rx="1" fill="#3b5998"/><path d="M11 16V10H13L13.4 7.6H11V6.2C11 5.4 11.3 5 12.2 5H13.4V2.8C13 2.7 12.2 2.6 11.4 2.6C9.6 2.6 8.4 3.8 8.4 5.8V7.6H6.4V10H8.4V16z" fill="#fff"/></svg>
<svg style="left:534.2px;top:554.2px;" width="16" height="12" viewBox="0 0 16 12"><rect x="0.4" y="0.4" width="15.2" height="11.2" rx="1" fill="#f2f2f2"/><path d="M0.4 1.4V11.6H3V4.4L8 8.2L13 4.4V11.6H15.6V1.4L14.4 0.4L8 5.2L1.6 0.4z" fill="#d9453a"/></svg>
<svg style="left:563.4px;top:553.2px;" width="17" height="14" viewBox="0 0 17 14"><path d="M0.4 1.6A1 1 0 0 1 1.4 0.6H6L7.6 2.4H15.6A1 1 0 0 1 16.6 3.4V12.4A1 1 0 0 1 15.6 13.4H1.4A1 1 0 0 1 0.4 12.4z" fill="#f5b51c"/><path d="M0.4 4.4H16.6V12.4A1 1 0 0 1 15.6 13.4H1.4A1 1 0 0 1 0.4 12.4z" fill="#fcd354"/><rect x="4" y="9.6" width="9" height="3.8" fill="#2f7fd3"/></svg>
<div class="b" style="left:569.8px;top:572px;width:4px;height:1.6px;background:#9a9a9a;border-radius:1px;"></div>
<svg style="left:593px;top:552.2px;" width="16" height="16" viewBox="0 0 16 16"><defs><linearGradient id="edg" x1="0" y1="0" x2="1" y2="1"><stop offset="0" stop-color="#35c1f1"/><stop offset="0.5" stop-color="#1b9de2"/><stop offset="1" stop-color="#0c59a4"/></linearGradient></defs><path d="M8 0.6C12.4 0.6 15.4 3.6 15.4 7.2C15.4 9.4 13.8 11 11.8 11C10.4 11 9.4 10.4 9.4 9.6C9.4 9 10 8.8 10 7.8C10 6.4 8.6 5.2 6.8 5.2C4 5.2 2.2 7.6 2.2 10.2C2.2 12 3 13.6 4.4 14.6C2 13.6 0.6 11 0.6 8C0.6 4 3.8 0.6 8 0.6z" fill="url(#edg)"/><path d="M2.2 10.2C2.2 7.6 4 5.2 6.8 5.2C5.4 6 4.8 7.6 5.2 9.4C5.8 12 8.2 13.6 11 13.2C12.4 13 13.6 12.2 14.4 11.2C13.2 13.8 10.8 15.4 8 15.4C4.8 15.4 2.2 13.2 2.2 10.2z" fill="#33c481"/><circle cx="4.4" cy="11.8" r="3.4" fill="#d9dde2"/><circle cx="4.4" cy="10.8" r="1.3" fill="#7b8591"/><path d="M2.2 14C2.6 12.6 6.2 12.6 6.6 14" fill="#7b8591"/></svg>
<div class="b" style="left:617.4px;top:546.6px;width:26.6px;height:27.6px;background:#352a2b;border-radius:3px;"></div>
<svg style="left:622.6px;top:552.2px;" width="16" height="16" viewBox="0 0 16 16"><circle cx="8" cy="8" r="7.6" fill="#db4437"/><path d="M8 8L1.4 4.2A7.6 7.6 0 0 0 5 15L8 8z" fill="#0f9d58"/><path d="M8 8L5 15A7.6 7.6 0 0 0 15.3 5.6H8z" fill="#ffcd40"/><path d="M1.4 4.2A7.6 7.6 0 0 1 15.3 5.6H8z" fill="#db4437"/><circle cx="8" cy="8" r="3.5" fill="#f1f1f1"/><circle cx="8" cy="8" r="2.8" fill="#4285f4"/></svg>
<div class="b" style="left:626px;top:571.6px;width:9.4px;height:1.8px;background:#4aa3ea;border-radius:1px;"></div>
<div class="b" style="left:646.8px;top:546.6px;width:26.6px;height:27.6px;background:#3a2628;border-radius:3px;"></div>
<svg style="left:652.6px;top:552.6px;" width="14" height="16" viewBox="0 0 14 16"><path d="M7 0.4C9 1.6 11.4 2.2 13.6 2.2V7.6C13.6 11.4 10.8 14.2 7 15.6C3.2 14.2 0.4 11.4 0.4 7.6V2.2C2.6 2.2 5 1.6 7 0.4z" fill="#2f8ae0"/><path d="M7 0.4C9 1.6 11.4 2.2 13.6 2.2V7.6H7z" fill="#f6c328"/><path d="M7 7.6V15.6C3.2 14.2 0.4 11.4 0.4 7.6z" fill="#f6c328"/></svg>
<div class="b" style="left:657.8px;top:572px;width:4px;height:1.6px;background:#d9a0a0;border-radius:1px;"></div>
<svg style="left:679.8px;top:552.6px;" width="17" height="17" viewBox="0 0 17 17"><path d="M8 0.8C12.4 0.8 15 3 15 7.4C15 11.8 12.4 14 8 14C7.4 14 6.8 14 6.2 13.8L3.4 16.2V12.8C1.6 11.8 1 9.8 1 7.4C1 3 3.6 0.8 8 0.8z" fill="#7d5bd6" stroke="#bcaaf0" stroke-width="0.8"/><path d="M5.2 4.2C5.8 3.8 6.4 4 6.8 4.8C7.2 5.6 7 6 6.6 6.4C6.8 7.6 8 8.8 9.2 9C9.6 8.6 10 8.4 10.8 8.8C11.6 9.2 11.8 9.8 11.4 10.4C10.8 11.2 10 11.4 8.8 10.8C6.8 9.8 5.4 8.4 4.8 6.4C4.4 5.4 4.6 4.6 5.2 4.2z" fill="#fff"/></svg>
<div class="b" style="left:688.4px;top:546.8px;width:14.6px;height:12.6px;background:#e5372f;border-radius:6.3px;"></div>
<span class="t" style="left:690.40px;top:550.11px;font-size:6.6px;color:#ffffff;transform:scaleX(0.9623);">220</span>
<div class="b" style="left:686px;top:572px;width:4px;height:1.6px;background:#9a9a9a;border-radius:1px;"></div>
<svg style="left:850.2px;top:557.8000000000001px;" width="8" height="5" viewBox="0 0 8 5"><path d="M0.6 4.4L4 1L7.4 4.4" stroke="#e6e6e6" stroke-width="0.9" fill="none"/></svg>
<svg style="left:864.4px;top:556.2px;" width="12" height="8" viewBox="0 0 12 8"><path d="M3 7.4H9.4A2.2 2.2 0 0 0 9.6 3A3.4 3.4 0 0 0 3.2 2.6A2.5 2.5 0 0 0 3 7.4z" fill="#8d8f92"/><path d="M1 0.4L11 7.8" stroke="#d0d0d0" stroke-width="0.9"/></svg>
<svg style="left:885.2px;top:554.6px;" width="7" height="11" viewBox="0 0 7 11"><rect x="2" y="0.4" width="3" height="6" rx="1.5" fill="#3a8be6"/><path d="M0.6 5A2.9 2.9 0 0 0 6.4 5M3.5 8V10.4" stroke="#3a8be6" stroke-width="0.9" fill="none"/></svg>
<svg style="left:904.4px;top:554.8000000000001px;" width="11" height="11" viewBox="0 0 11 11"><rect x="0.6" y="1.8" width="6.6" height="5.4" fill="none" stroke="#f2f2f2" stroke-width="1"/><path d="M2 9.6H6M4 7.2V9.6" stroke="#f2f2f2" stroke-width="0.9"/><rect x="7.8" y="0.4" width="2.6" height="3.2" fill="#f2f2f2"/><path d="M9.1 3.6V9.6H7" stroke="#f2f2f2" stroke-width="0.8" fill="none"/></svg>
<svg style="left:920px;top:556.8000000000001px;" width="8" height="7" viewBox="0 0 8 7"><path d="M0.4 2.4H2L4.2 0.6V6.4L2 4.6H0.4z" fill="none" stroke="#e6e6e6" stroke-width="0.8"/><path d="M5.6 2.2A2 2 0 0 1 5.6 4.8" stroke="#9a9a9a" stroke-width="0.7" fill="none"/></svg>
<svg style="left:936px;top:556.6px;" width="12" height="7" viewBox="0 0 12 7"><rect x="2.6" y="0.8" width="8" height="5" rx="0.8" fill="#f2f2f2"/><rect x="10.6" y="2.4" width="1" height="1.8" fill="#f2f2f2"/><path d="M0.2 2.2H2.6M0.2 4.4H2.6M1.4 1V5.6" stroke="#f2f2f2" stroke-width="0.8"/></svg>
<span class="t" style="left:978.00px;top:550.94px;font-size:8.1px;color:#f2f2f2;transform:scaleX(0.8593);">15:23</span>
<span class="t" style="left:956.70px;top:561.64px;font-size:8.1px;color:#f2f2f2;transform:scaleX(0.9556);">06.05.2022</span>
<div class="b" style="left:999.9px;top:554.1px;width:12.2px;height:12.2px;background:#1b86e6;border-radius:50%;"></div>
<span class="t" style="left:1003.95px;top:556.74px;font-size:7.4px;color:#bfe0ff;">6</span>
</div></div></body></html>
